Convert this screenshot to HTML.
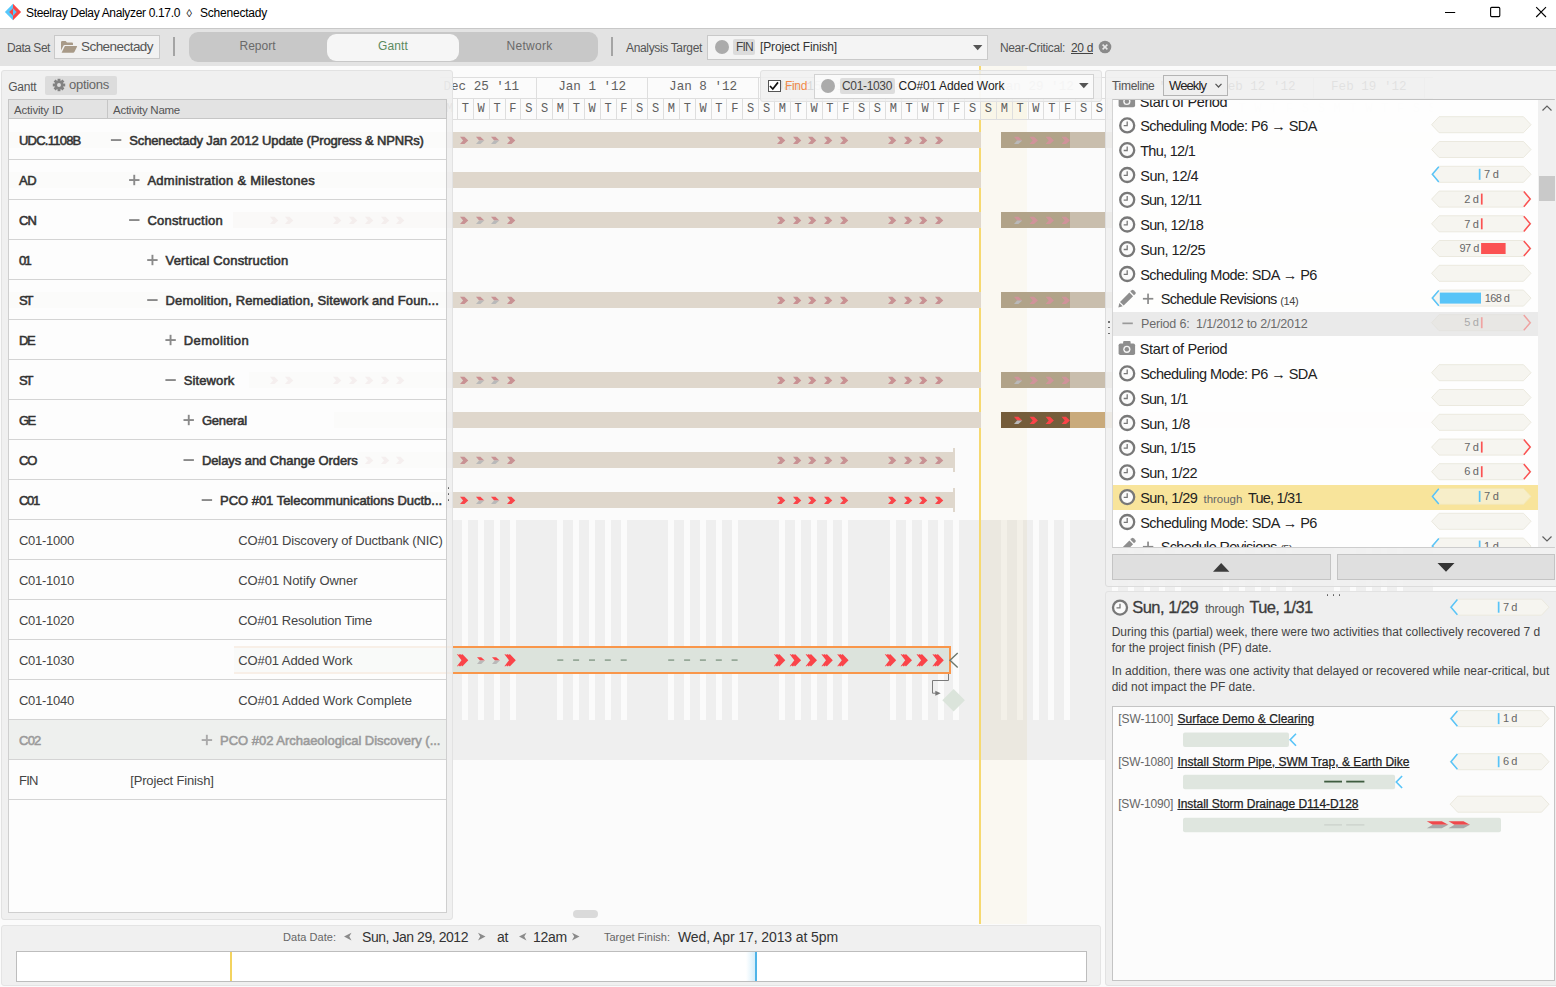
<!DOCTYPE html>
<html><head><meta charset="utf-8"><title>Steelray Delay Analyzer</title>
<style>
html,body{margin:0;padding:0;}
body{width:1556px;height:987px;overflow:hidden;background:#fbfbfb;position:relative;font-family:"Liberation Sans",sans-serif;}
#root{position:absolute;left:0;top:0;width:1556px;height:987px;overflow:hidden;}
#root div{position:absolute;box-sizing:border-box;}
#root svg{position:absolute;overflow:visible;}
</style></head><body><div id="root">
<div style="left:0;top:0;width:1433px;height:987px;clip-path:inset(66px 0 63px 9px);">
<div style="left:0px;top:66px;width:1556px;height:858px;background:#fbfbfb;"></div>
<div style="left:440px;top:520px;width:993px;height:240px;background:#efefef;"></div>
<div style="left:462px;top:520px;width:6px;height:200px;background:#fbfbfb;"></div>
<div style="left:478px;top:520px;width:6px;height:200px;background:#fbfbfb;"></div>
<div style="left:494px;top:520px;width:6px;height:200px;background:#fbfbfb;"></div>
<div style="left:510px;top:520px;width:6px;height:200px;background:#fbfbfb;"></div>
<div style="left:557px;top:520px;width:6px;height:200px;background:#fbfbfb;"></div>
<div style="left:573px;top:520px;width:6px;height:200px;background:#fbfbfb;"></div>
<div style="left:589px;top:520px;width:6px;height:200px;background:#fbfbfb;"></div>
<div style="left:605px;top:520px;width:6px;height:200px;background:#fbfbfb;"></div>
<div style="left:621px;top:520px;width:6px;height:200px;background:#fbfbfb;"></div>
<div style="left:668px;top:520px;width:6px;height:200px;background:#fbfbfb;"></div>
<div style="left:684px;top:520px;width:6px;height:200px;background:#fbfbfb;"></div>
<div style="left:700px;top:520px;width:6px;height:200px;background:#fbfbfb;"></div>
<div style="left:716px;top:520px;width:6px;height:200px;background:#fbfbfb;"></div>
<div style="left:732px;top:520px;width:6px;height:200px;background:#fbfbfb;"></div>
<div style="left:779px;top:520px;width:6px;height:200px;background:#fbfbfb;"></div>
<div style="left:795px;top:520px;width:6px;height:200px;background:#fbfbfb;"></div>
<div style="left:811px;top:520px;width:6px;height:200px;background:#fbfbfb;"></div>
<div style="left:827px;top:520px;width:6px;height:200px;background:#fbfbfb;"></div>
<div style="left:842px;top:520px;width:6px;height:200px;background:#fbfbfb;"></div>
<div style="left:890px;top:520px;width:6px;height:200px;background:#fbfbfb;"></div>
<div style="left:906px;top:520px;width:6px;height:200px;background:#fbfbfb;"></div>
<div style="left:922px;top:520px;width:6px;height:200px;background:#fbfbfb;"></div>
<div style="left:938px;top:520px;width:6px;height:200px;background:#fbfbfb;"></div>
<div style="left:953px;top:520px;width:6px;height:200px;background:#fbfbfb;"></div>
<div style="left:1001px;top:520px;width:6px;height:200px;background:#fbfbfb;"></div>
<div style="left:1017px;top:520px;width:6px;height:200px;background:#fbfbfb;"></div>
<div style="left:1033px;top:520px;width:6px;height:200px;background:#fbfbfb;"></div>
<div style="left:1048px;top:520px;width:6px;height:200px;background:#fbfbfb;"></div>
<div style="left:1064px;top:520px;width:6px;height:200px;background:#fbfbfb;"></div>
<div style="left:1112px;top:520px;width:6px;height:200px;background:#fbfbfb;"></div>
<div style="left:1128px;top:520px;width:6px;height:200px;background:#fbfbfb;"></div>
<div style="left:1144px;top:520px;width:6px;height:200px;background:#fbfbfb;"></div>
<div style="left:1159px;top:520px;width:6px;height:200px;background:#fbfbfb;"></div>
<div style="left:1175px;top:520px;width:6px;height:200px;background:#fbfbfb;"></div>
<div style="left:1223px;top:520px;width:6px;height:200px;background:#fbfbfb;"></div>
<div style="left:1239px;top:520px;width:6px;height:200px;background:#fbfbfb;"></div>
<div style="left:1255px;top:520px;width:6px;height:200px;background:#fbfbfb;"></div>
<div style="left:1270px;top:520px;width:6px;height:200px;background:#fbfbfb;"></div>
<div style="left:1286px;top:520px;width:6px;height:200px;background:#fbfbfb;"></div>
<div style="left:1334px;top:520px;width:6px;height:200px;background:#fbfbfb;"></div>
<div style="left:1350px;top:520px;width:6px;height:200px;background:#fbfbfb;"></div>
<div style="left:1366px;top:520px;width:6px;height:200px;background:#fbfbfb;"></div>
<div style="left:1381px;top:520px;width:6px;height:200px;background:#fbfbfb;"></div>
<div style="left:1397px;top:520px;width:6px;height:200px;background:#fbfbfb;"></div>
<div style="left:981px;top:66px;width:46px;height:454px;background:rgba(245,238,205,0.22);"></div>
<div style="left:981px;top:520px;width:46px;height:240px;background:rgba(225,215,190,0.30);"></div>
<div style="left:981px;top:760px;width:46px;height:164px;background:rgba(245,238,205,0.22);"></div>
<div style="left:9px;top:132px;width:972px;height:16px;background:#dfd7cc;"></div>
<div style="left:1001px;top:132px;width:69.3px;height:16px;background:#b1a389;"></div>
<div style="left:1070.3px;top:132px;width:362.70000000000005px;height:16px;background:#c9bead;"></div>
<div style="left:233px;top:212px;width:748px;height:16px;background:#dfd7cc;"></div>
<div style="left:1001px;top:212px;width:69.3px;height:16px;background:#b1a389;"></div>
<div style="left:1070.3px;top:212px;width:362.70000000000005px;height:16px;background:#c9bead;"></div>
<div style="left:9px;top:292px;width:972px;height:16px;background:#dfd7cc;"></div>
<div style="left:1001px;top:292px;width:69.3px;height:16px;background:#b1a389;"></div>
<div style="left:1070.3px;top:292px;width:362.70000000000005px;height:16px;background:#c9bead;"></div>
<div style="left:249px;top:372px;width:732px;height:16px;background:#dfd7cc;"></div>
<div style="left:1001px;top:372px;width:69.3px;height:16px;background:#b1a389;"></div>
<div style="left:1070.3px;top:372px;width:362.70000000000005px;height:16px;background:#c9bead;"></div>
<div style="left:9px;top:172px;width:972px;height:16px;background:#dfd7cc;"></div>
<div style="left:334px;top:412px;width:647px;height:16px;background:#dfd7cc;"></div>
<div style="left:1001px;top:412px;width:69.3px;height:16px;background:#755d3b;"></div>
<div style="left:1070.3px;top:412px;width:362.70000000000005px;height:16px;background:#c9aa7b;"></div>
<div style="left:357px;top:452px;width:597px;height:16px;background:#dfd7cc;"></div>
<div style="left:953px;top:448px;width:2px;height:24px;background:#dfd7cc;"></div>
<div style="left:357px;top:492px;width:597px;height:16px;background:#dfd7cc;"></div>
<div style="left:953px;top:488px;width:2px;height:24px;background:#dfd7cc;"></div>
<div style="left:234px;top:645.5px;width:717px;height:28.5px;background:#dce3dc;border:2.4px solid #f9964a;"></div>
<svg width="1556" height="987" style="left:0;top:0"><polygon points="460.0,136.8 464.4,136.8 468.3,140.4 464.4,144.0 460.0,144.0 463.1,140.4" fill="#c89193"/><polygon points="476.0,136.8 480.4,136.8 484.3,140.4 479.1,140.4" fill="#c89193"/><polygon points="479.1,140.4 484.3,140.4 480.4,144.0 476.0,144.0" fill="#b9b9b9"/><polygon points="491.0,136.8 495.4,136.8 499.3,140.4 494.1,140.4" fill="#c89193"/><polygon points="494.1,140.4 499.3,140.4 495.4,144.0 491.0,144.0" fill="#b9b9b9"/><polygon points="507.0,136.8 511.4,136.8 515.3,140.4 511.4,144.0 507.0,144.0 510.1,140.4" fill="#c89193"/><polygon points="777.0,136.8 781.4,136.8 785.3,140.4 781.4,144.0 777.0,144.0 780.1,140.4" fill="#c89193"/><polygon points="793.0,136.8 797.4,136.8 801.3,140.4 797.4,144.0 793.0,144.0 796.1,140.4" fill="#c89193"/><polygon points="808.0,136.8 812.4,136.8 816.3,140.4 812.4,144.0 808.0,144.0 811.1,140.4" fill="#c89193"/><polygon points="824.0,136.8 828.4,136.8 832.3,140.4 828.4,144.0 824.0,144.0 827.1,140.4" fill="#c89193"/><polygon points="840.0,136.8 844.4,136.8 848.3,140.4 844.4,144.0 840.0,144.0 843.1,140.4" fill="#c89193"/><polygon points="888.0,136.8 892.4,136.8 896.3,140.4 892.4,144.0 888.0,144.0 891.1,140.4" fill="#c89193"/><polygon points="904.0,136.8 908.4,136.8 912.3,140.4 908.4,144.0 904.0,144.0 907.1,140.4" fill="#c89193"/><polygon points="919.0,136.8 923.4,136.8 927.3,140.4 923.4,144.0 919.0,144.0 922.1,140.4" fill="#c89193"/><polygon points="935.0,136.8 939.4,136.8 943.3,140.4 939.4,144.0 935.0,144.0 938.1,140.4" fill="#c89193"/><polygon points="270.0,136.8 274.4,136.8 278.3,140.4 274.4,144.0 270.0,144.0 273.1,140.4" fill="#c89193"/><polygon points="285.0,136.8 289.4,136.8 293.3,140.4 289.4,144.0 285.0,144.0 288.1,140.4" fill="#c89193"/><polygon points="333.0,136.8 337.4,136.8 341.3,140.4 337.4,144.0 333.0,144.0 336.1,140.4" fill="#c89193"/><polygon points="349.0,136.8 353.4,136.8 357.3,140.4 353.4,144.0 349.0,144.0 352.1,140.4" fill="#c89193"/><polygon points="365.0,136.8 369.4,136.8 373.3,140.4 369.4,144.0 365.0,144.0 368.1,140.4" fill="#c89193"/><polygon points="381.0,136.8 385.4,136.8 389.3,140.4 385.4,144.0 381.0,144.0 384.1,140.4" fill="#c89193"/><polygon points="396.0,136.8 400.4,136.8 404.3,140.4 400.4,144.0 396.0,144.0 399.1,140.4" fill="#c89193"/><polygon points="1014.0,136.8 1018.4,136.8 1022.3,140.4 1017.1,140.4" fill="#d0939a"/><polygon points="1017.1,140.4 1022.3,140.4 1018.4,144.0 1014.0,144.0" fill="#b9b9b9"/><polygon points="1029.6,136.8 1034.0,136.8 1037.9,140.4 1034.0,144.0 1029.6,144.0 1032.7,140.4" fill="#d0939a"/><polygon points="1045.6,136.8 1050.0,136.8 1053.9,140.4 1050.0,144.0 1045.6,144.0 1048.7,140.4" fill="#d0939a"/><polygon points="1061.6,136.8 1066.0,136.8 1069.9,140.4 1066.0,144.0 1061.6,144.0 1064.7,140.4" fill="#d0939a"/><polygon points="460.0,216.8 464.4,216.8 468.3,220.4 464.4,224.0 460.0,224.0 463.1,220.4" fill="#c89193"/><polygon points="476.0,216.8 480.4,216.8 484.3,220.4 479.1,220.4" fill="#c89193"/><polygon points="479.1,220.4 484.3,220.4 480.4,224.0 476.0,224.0" fill="#b9b9b9"/><polygon points="491.0,216.8 495.4,216.8 499.3,220.4 494.1,220.4" fill="#c89193"/><polygon points="494.1,220.4 499.3,220.4 495.4,224.0 491.0,224.0" fill="#b9b9b9"/><polygon points="507.0,216.8 511.4,216.8 515.3,220.4 511.4,224.0 507.0,224.0 510.1,220.4" fill="#c89193"/><polygon points="777.0,216.8 781.4,216.8 785.3,220.4 781.4,224.0 777.0,224.0 780.1,220.4" fill="#c89193"/><polygon points="793.0,216.8 797.4,216.8 801.3,220.4 797.4,224.0 793.0,224.0 796.1,220.4" fill="#c89193"/><polygon points="808.0,216.8 812.4,216.8 816.3,220.4 812.4,224.0 808.0,224.0 811.1,220.4" fill="#c89193"/><polygon points="824.0,216.8 828.4,216.8 832.3,220.4 828.4,224.0 824.0,224.0 827.1,220.4" fill="#c89193"/><polygon points="840.0,216.8 844.4,216.8 848.3,220.4 844.4,224.0 840.0,224.0 843.1,220.4" fill="#c89193"/><polygon points="888.0,216.8 892.4,216.8 896.3,220.4 892.4,224.0 888.0,224.0 891.1,220.4" fill="#c89193"/><polygon points="904.0,216.8 908.4,216.8 912.3,220.4 908.4,224.0 904.0,224.0 907.1,220.4" fill="#c89193"/><polygon points="919.0,216.8 923.4,216.8 927.3,220.4 923.4,224.0 919.0,224.0 922.1,220.4" fill="#c89193"/><polygon points="935.0,216.8 939.4,216.8 943.3,220.4 939.4,224.0 935.0,224.0 938.1,220.4" fill="#c89193"/><polygon points="270.0,216.8 274.4,216.8 278.3,220.4 274.4,224.0 270.0,224.0 273.1,220.4" fill="#c89193"/><polygon points="285.0,216.8 289.4,216.8 293.3,220.4 289.4,224.0 285.0,224.0 288.1,220.4" fill="#c89193"/><polygon points="333.0,216.8 337.4,216.8 341.3,220.4 337.4,224.0 333.0,224.0 336.1,220.4" fill="#c89193"/><polygon points="349.0,216.8 353.4,216.8 357.3,220.4 353.4,224.0 349.0,224.0 352.1,220.4" fill="#c89193"/><polygon points="365.0,216.8 369.4,216.8 373.3,220.4 369.4,224.0 365.0,224.0 368.1,220.4" fill="#c89193"/><polygon points="381.0,216.8 385.4,216.8 389.3,220.4 385.4,224.0 381.0,224.0 384.1,220.4" fill="#c89193"/><polygon points="396.0,216.8 400.4,216.8 404.3,220.4 400.4,224.0 396.0,224.0 399.1,220.4" fill="#c89193"/><polygon points="1014.0,216.8 1018.4,216.8 1022.3,220.4 1017.1,220.4" fill="#d0939a"/><polygon points="1017.1,220.4 1022.3,220.4 1018.4,224.0 1014.0,224.0" fill="#b9b9b9"/><polygon points="1029.6,216.8 1034.0,216.8 1037.9,220.4 1034.0,224.0 1029.6,224.0 1032.7,220.4" fill="#d0939a"/><polygon points="1045.6,216.8 1050.0,216.8 1053.9,220.4 1050.0,224.0 1045.6,224.0 1048.7,220.4" fill="#d0939a"/><polygon points="1061.6,216.8 1066.0,216.8 1069.9,220.4 1066.0,224.0 1061.6,224.0 1064.7,220.4" fill="#d0939a"/><polygon points="460.0,296.8 464.4,296.8 468.3,300.4 464.4,304.0 460.0,304.0 463.1,300.4" fill="#c89193"/><polygon points="476.0,296.8 480.4,296.8 484.3,300.4 479.1,300.4" fill="#c89193"/><polygon points="479.1,300.4 484.3,300.4 480.4,304.0 476.0,304.0" fill="#b9b9b9"/><polygon points="491.0,296.8 495.4,296.8 499.3,300.4 494.1,300.4" fill="#c89193"/><polygon points="494.1,300.4 499.3,300.4 495.4,304.0 491.0,304.0" fill="#b9b9b9"/><polygon points="507.0,296.8 511.4,296.8 515.3,300.4 511.4,304.0 507.0,304.0 510.1,300.4" fill="#c89193"/><polygon points="777.0,296.8 781.4,296.8 785.3,300.4 781.4,304.0 777.0,304.0 780.1,300.4" fill="#c89193"/><polygon points="793.0,296.8 797.4,296.8 801.3,300.4 797.4,304.0 793.0,304.0 796.1,300.4" fill="#c89193"/><polygon points="808.0,296.8 812.4,296.8 816.3,300.4 812.4,304.0 808.0,304.0 811.1,300.4" fill="#c89193"/><polygon points="824.0,296.8 828.4,296.8 832.3,300.4 828.4,304.0 824.0,304.0 827.1,300.4" fill="#c89193"/><polygon points="840.0,296.8 844.4,296.8 848.3,300.4 844.4,304.0 840.0,304.0 843.1,300.4" fill="#c89193"/><polygon points="888.0,296.8 892.4,296.8 896.3,300.4 892.4,304.0 888.0,304.0 891.1,300.4" fill="#c89193"/><polygon points="904.0,296.8 908.4,296.8 912.3,300.4 908.4,304.0 904.0,304.0 907.1,300.4" fill="#c89193"/><polygon points="919.0,296.8 923.4,296.8 927.3,300.4 923.4,304.0 919.0,304.0 922.1,300.4" fill="#c89193"/><polygon points="935.0,296.8 939.4,296.8 943.3,300.4 939.4,304.0 935.0,304.0 938.1,300.4" fill="#c89193"/><polygon points="270.0,296.8 274.4,296.8 278.3,300.4 274.4,304.0 270.0,304.0 273.1,300.4" fill="#c89193"/><polygon points="285.0,296.8 289.4,296.8 293.3,300.4 289.4,304.0 285.0,304.0 288.1,300.4" fill="#c89193"/><polygon points="333.0,296.8 337.4,296.8 341.3,300.4 337.4,304.0 333.0,304.0 336.1,300.4" fill="#c89193"/><polygon points="349.0,296.8 353.4,296.8 357.3,300.4 353.4,304.0 349.0,304.0 352.1,300.4" fill="#c89193"/><polygon points="365.0,296.8 369.4,296.8 373.3,300.4 369.4,304.0 365.0,304.0 368.1,300.4" fill="#c89193"/><polygon points="381.0,296.8 385.4,296.8 389.3,300.4 385.4,304.0 381.0,304.0 384.1,300.4" fill="#c89193"/><polygon points="396.0,296.8 400.4,296.8 404.3,300.4 400.4,304.0 396.0,304.0 399.1,300.4" fill="#c89193"/><polygon points="1014.0,296.8 1018.4,296.8 1022.3,300.4 1017.1,300.4" fill="#d0939a"/><polygon points="1017.1,300.4 1022.3,300.4 1018.4,304.0 1014.0,304.0" fill="#b9b9b9"/><polygon points="1029.6,296.8 1034.0,296.8 1037.9,300.4 1034.0,304.0 1029.6,304.0 1032.7,300.4" fill="#d0939a"/><polygon points="1045.6,296.8 1050.0,296.8 1053.9,300.4 1050.0,304.0 1045.6,304.0 1048.7,300.4" fill="#d0939a"/><polygon points="1061.6,296.8 1066.0,296.8 1069.9,300.4 1066.0,304.0 1061.6,304.0 1064.7,300.4" fill="#d0939a"/><polygon points="460.0,376.8 464.4,376.8 468.3,380.4 464.4,384.0 460.0,384.0 463.1,380.4" fill="#c89193"/><polygon points="476.0,376.8 480.4,376.8 484.3,380.4 479.1,380.4" fill="#c89193"/><polygon points="479.1,380.4 484.3,380.4 480.4,384.0 476.0,384.0" fill="#b9b9b9"/><polygon points="491.0,376.8 495.4,376.8 499.3,380.4 494.1,380.4" fill="#c89193"/><polygon points="494.1,380.4 499.3,380.4 495.4,384.0 491.0,384.0" fill="#b9b9b9"/><polygon points="507.0,376.8 511.4,376.8 515.3,380.4 511.4,384.0 507.0,384.0 510.1,380.4" fill="#c89193"/><polygon points="777.0,376.8 781.4,376.8 785.3,380.4 781.4,384.0 777.0,384.0 780.1,380.4" fill="#c89193"/><polygon points="793.0,376.8 797.4,376.8 801.3,380.4 797.4,384.0 793.0,384.0 796.1,380.4" fill="#c89193"/><polygon points="808.0,376.8 812.4,376.8 816.3,380.4 812.4,384.0 808.0,384.0 811.1,380.4" fill="#c89193"/><polygon points="824.0,376.8 828.4,376.8 832.3,380.4 828.4,384.0 824.0,384.0 827.1,380.4" fill="#c89193"/><polygon points="840.0,376.8 844.4,376.8 848.3,380.4 844.4,384.0 840.0,384.0 843.1,380.4" fill="#c89193"/><polygon points="888.0,376.8 892.4,376.8 896.3,380.4 892.4,384.0 888.0,384.0 891.1,380.4" fill="#c89193"/><polygon points="904.0,376.8 908.4,376.8 912.3,380.4 908.4,384.0 904.0,384.0 907.1,380.4" fill="#c89193"/><polygon points="919.0,376.8 923.4,376.8 927.3,380.4 923.4,384.0 919.0,384.0 922.1,380.4" fill="#c89193"/><polygon points="935.0,376.8 939.4,376.8 943.3,380.4 939.4,384.0 935.0,384.0 938.1,380.4" fill="#c89193"/><polygon points="270.0,376.8 274.4,376.8 278.3,380.4 274.4,384.0 270.0,384.0 273.1,380.4" fill="#c89193"/><polygon points="285.0,376.8 289.4,376.8 293.3,380.4 289.4,384.0 285.0,384.0 288.1,380.4" fill="#c89193"/><polygon points="333.0,376.8 337.4,376.8 341.3,380.4 337.4,384.0 333.0,384.0 336.1,380.4" fill="#c89193"/><polygon points="349.0,376.8 353.4,376.8 357.3,380.4 353.4,384.0 349.0,384.0 352.1,380.4" fill="#c89193"/><polygon points="365.0,376.8 369.4,376.8 373.3,380.4 369.4,384.0 365.0,384.0 368.1,380.4" fill="#c89193"/><polygon points="381.0,376.8 385.4,376.8 389.3,380.4 385.4,384.0 381.0,384.0 384.1,380.4" fill="#c89193"/><polygon points="396.0,376.8 400.4,376.8 404.3,380.4 400.4,384.0 396.0,384.0 399.1,380.4" fill="#c89193"/><polygon points="1014.0,376.8 1018.4,376.8 1022.3,380.4 1017.1,380.4" fill="#d0939a"/><polygon points="1017.1,380.4 1022.3,380.4 1018.4,384.0 1014.0,384.0" fill="#b9b9b9"/><polygon points="1029.6,376.8 1034.0,376.8 1037.9,380.4 1034.0,384.0 1029.6,384.0 1032.7,380.4" fill="#d0939a"/><polygon points="1045.6,376.8 1050.0,376.8 1053.9,380.4 1050.0,384.0 1045.6,384.0 1048.7,380.4" fill="#d0939a"/><polygon points="1061.6,376.8 1066.0,376.8 1069.9,380.4 1066.0,384.0 1061.6,384.0 1064.7,380.4" fill="#d0939a"/><polygon points="1014.0,416.8 1018.4,416.8 1022.3,420.4 1017.1,420.4" fill="#fa4449"/><polygon points="1017.1,420.4 1022.3,420.4 1018.4,424.0 1014.0,424.0" fill="#b9b9b9"/><polygon points="1029.6,416.8 1034.0,416.8 1037.9,420.4 1034.0,424.0 1029.6,424.0 1032.7,420.4" fill="#fa4449"/><polygon points="1045.6,416.8 1050.0,416.8 1053.9,420.4 1050.0,424.0 1045.6,424.0 1048.7,420.4" fill="#fa4449"/><polygon points="1061.6,416.8 1066.0,416.8 1069.9,420.4 1066.0,424.0 1061.6,424.0 1064.7,420.4" fill="#fa4449"/><polygon points="460.0,456.8 464.4,456.8 468.3,460.4 464.4,464.0 460.0,464.0 463.1,460.4" fill="#c89193"/><polygon points="476.0,456.8 480.4,456.8 484.3,460.4 479.1,460.4" fill="#c89193"/><polygon points="479.1,460.4 484.3,460.4 480.4,464.0 476.0,464.0" fill="#b9b9b9"/><polygon points="491.0,456.8 495.4,456.8 499.3,460.4 494.1,460.4" fill="#c89193"/><polygon points="494.1,460.4 499.3,460.4 495.4,464.0 491.0,464.0" fill="#b9b9b9"/><polygon points="507.0,456.8 511.4,456.8 515.3,460.4 511.4,464.0 507.0,464.0 510.1,460.4" fill="#c89193"/><polygon points="777.0,456.8 781.4,456.8 785.3,460.4 781.4,464.0 777.0,464.0 780.1,460.4" fill="#c89193"/><polygon points="793.0,456.8 797.4,456.8 801.3,460.4 797.4,464.0 793.0,464.0 796.1,460.4" fill="#c89193"/><polygon points="808.0,456.8 812.4,456.8 816.3,460.4 812.4,464.0 808.0,464.0 811.1,460.4" fill="#c89193"/><polygon points="824.0,456.8 828.4,456.8 832.3,460.4 828.4,464.0 824.0,464.0 827.1,460.4" fill="#c89193"/><polygon points="840.0,456.8 844.4,456.8 848.3,460.4 844.4,464.0 840.0,464.0 843.1,460.4" fill="#c89193"/><polygon points="888.0,456.8 892.4,456.8 896.3,460.4 892.4,464.0 888.0,464.0 891.1,460.4" fill="#c89193"/><polygon points="904.0,456.8 908.4,456.8 912.3,460.4 908.4,464.0 904.0,464.0 907.1,460.4" fill="#c89193"/><polygon points="919.0,456.8 923.4,456.8 927.3,460.4 923.4,464.0 919.0,464.0 922.1,460.4" fill="#c89193"/><polygon points="935.0,456.8 939.4,456.8 943.3,460.4 939.4,464.0 935.0,464.0 938.1,460.4" fill="#c89193"/><polygon points="365.0,456.8 369.4,456.8 373.3,460.4 369.4,464.0 365.0,464.0 368.1,460.4" fill="#c89193"/><polygon points="381.0,456.8 385.4,456.8 389.3,460.4 385.4,464.0 381.0,464.0 384.1,460.4" fill="#c89193"/><polygon points="396.0,456.8 400.4,456.8 404.3,460.4 400.4,464.0 396.0,464.0 399.1,460.4" fill="#c89193"/><polygon points="460.0,496.8 464.4,496.8 468.3,500.4 464.4,504.0 460.0,504.0 463.1,500.4" fill="#fa4449"/><polygon points="476.0,496.8 480.4,496.8 484.3,500.4 479.1,500.4" fill="#fa4449"/><polygon points="479.1,500.4 484.3,500.4 480.4,504.0 476.0,504.0" fill="#b9b9b9"/><polygon points="491.0,496.8 495.4,496.8 499.3,500.4 494.1,500.4" fill="#fa4449"/><polygon points="494.1,500.4 499.3,500.4 495.4,504.0 491.0,504.0" fill="#b9b9b9"/><polygon points="507.0,496.8 511.4,496.8 515.3,500.4 511.4,504.0 507.0,504.0 510.1,500.4" fill="#fa4449"/><polygon points="777.0,496.8 781.4,496.8 785.3,500.4 781.4,504.0 777.0,504.0 780.1,500.4" fill="#fa4449"/><polygon points="793.0,496.8 797.4,496.8 801.3,500.4 797.4,504.0 793.0,504.0 796.1,500.4" fill="#fa4449"/><polygon points="808.0,496.8 812.4,496.8 816.3,500.4 812.4,504.0 808.0,504.0 811.1,500.4" fill="#fa4449"/><polygon points="824.0,496.8 828.4,496.8 832.3,500.4 828.4,504.0 824.0,504.0 827.1,500.4" fill="#fa4449"/><polygon points="840.0,496.8 844.4,496.8 848.3,500.4 844.4,504.0 840.0,504.0 843.1,500.4" fill="#fa4449"/><polygon points="888.0,496.8 892.4,496.8 896.3,500.4 892.4,504.0 888.0,504.0 891.1,500.4" fill="#fa4449"/><polygon points="904.0,496.8 908.4,496.8 912.3,500.4 908.4,504.0 904.0,504.0 907.1,500.4" fill="#fa4449"/><polygon points="919.0,496.8 923.4,496.8 927.3,500.4 923.4,504.0 919.0,504.0 922.1,500.4" fill="#fa4449"/><polygon points="935.0,496.8 939.4,496.8 943.3,500.4 939.4,504.0 935.0,504.0 938.1,500.4" fill="#fa4449"/><polygon points="365.0,496.8 369.4,496.8 373.3,500.4 369.4,504.0 365.0,504.0 368.1,500.4" fill="#fa4449"/><polygon points="381.0,496.8 385.4,496.8 389.3,500.4 385.4,504.0 381.0,504.0 384.1,500.4" fill="#fa4449"/><polygon points="396.0,496.8 400.4,496.8 404.3,500.4 400.4,504.0 396.0,504.0 399.1,500.4" fill="#fa4449"/><polygon points="456.9,654.2 458.1,654.2 458.7,655.1 459.4,654.2 460.6,654.2 461.2,655.1 461.9,654.2 462.5,654.2 468.3,660.2 462.5,666.2 461.9,666.2 461.2,665.3 460.6,666.2 459.4,666.2 458.7,665.3 458.1,666.2 456.9,666.2 461.5,660.2" fill="#fa4449"/><polygon points="477.0,657.2 481.2,657.2 484.9,660.6 480.0,660.6" fill="#fa4449"/><polygon points="480.0,660.6 484.9,660.6 481.2,664.0 477.0,664.0" fill="#b9b9b9"/><polygon points="492.0,657.2 496.2,657.2 499.9,660.6 495.0,660.6" fill="#fa4449"/><polygon points="495.0,660.6 499.9,660.6 496.2,664.0 492.0,664.0" fill="#b9b9b9"/><polygon points="504.4,654.2 505.6,654.2 506.2,655.1 506.9,654.2 508.1,654.2 508.7,655.1 509.4,654.2 510.0,654.2 515.8,660.2 510.0,666.2 509.4,666.2 508.7,665.3 508.1,666.2 506.9,666.2 506.2,665.3 505.6,666.2 504.4,666.2 509.0,660.2" fill="#fa4449"/><polygon points="773.9,654.2 775.1,654.2 775.7,655.1 776.4,654.2 777.6,654.2 778.2,655.1 778.9,654.2 779.5,654.2 785.3,660.2 779.5,666.2 778.9,666.2 778.2,665.3 777.6,666.2 776.4,666.2 775.7,665.3 775.1,666.2 773.9,666.2 778.5,660.2" fill="#fa4449"/><polygon points="789.7,654.2 790.9,654.2 791.5,655.1 792.2,654.2 793.4,654.2 794.0,655.1 794.7,654.2 795.3,654.2 801.1,660.2 795.3,666.2 794.7,666.2 794.0,665.3 793.4,666.2 792.2,666.2 791.5,665.3 790.9,666.2 789.7,666.2 794.3,660.2" fill="#fa4449"/><polygon points="805.6,654.2 806.8,654.2 807.4,655.1 808.1,654.2 809.3,654.2 809.9,655.1 810.6,654.2 811.2,654.2 817.0,660.2 811.2,666.2 810.6,666.2 809.9,665.3 809.3,666.2 808.1,666.2 807.4,665.3 806.8,666.2 805.6,666.2 810.2,660.2" fill="#fa4449"/><polygon points="821.4,654.2 822.6,654.2 823.2,655.1 823.9,654.2 825.1,654.2 825.7,655.1 826.4,654.2 827.0,654.2 832.8,660.2 827.0,666.2 826.4,666.2 825.7,665.3 825.1,666.2 823.9,666.2 823.2,665.3 822.6,666.2 821.4,666.2 826.0,660.2" fill="#fa4449"/><polygon points="837.2,654.2 838.4,654.2 839.0,655.1 839.7,654.2 840.9,654.2 841.5,655.1 842.2,654.2 842.8,654.2 848.6,660.2 842.8,666.2 842.2,666.2 841.5,665.3 840.9,666.2 839.7,666.2 839.0,665.3 838.4,666.2 837.2,666.2 841.8,660.2" fill="#fa4449"/><polygon points="884.8,654.2 886.0,654.2 886.6,655.1 887.3,654.2 888.5,654.2 889.1,655.1 889.8,654.2 890.4,654.2 896.2,660.2 890.4,666.2 889.8,666.2 889.1,665.3 888.5,666.2 887.3,666.2 886.6,665.3 886.0,666.2 884.8,666.2 889.4,660.2" fill="#fa4449"/><polygon points="900.6,654.2 901.8,654.2 902.4,655.1 903.1,654.2 904.3,654.2 904.9,655.1 905.6,654.2 906.2,654.2 912.0,660.2 906.2,666.2 905.6,666.2 904.9,665.3 904.3,666.2 903.1,666.2 902.4,665.3 901.8,666.2 900.6,666.2 905.2,660.2" fill="#fa4449"/><polygon points="916.5,654.2 917.7,654.2 918.3,655.1 919.0,654.2 920.2,654.2 920.8,655.1 921.5,654.2 922.1,654.2 927.9,660.2 922.1,666.2 921.5,666.2 920.8,665.3 920.2,666.2 919.0,666.2 918.3,665.3 917.7,666.2 916.5,666.2 921.1,660.2" fill="#fa4449"/><polygon points="932.4,654.2 933.6,654.2 934.2,655.1 934.9,654.2 936.1,654.2 936.7,655.1 937.4,654.2 938.0,654.2 943.8,660.2 938.0,666.2 937.4,666.2 936.7,665.3 936.1,666.2 934.9,666.2 934.2,665.3 933.6,666.2 932.4,666.2 937.0,660.2" fill="#fa4449"/><rect x="557.3" y="659.3" width="6" height="1.6" fill="#8fa292"/><rect x="573.1" y="659.3" width="6" height="1.6" fill="#8fa292"/><rect x="589.0" y="659.3" width="6" height="1.6" fill="#8fa292"/><rect x="604.8" y="659.3" width="6" height="1.6" fill="#8fa292"/><rect x="620.7" y="659.3" width="6" height="1.6" fill="#8fa292"/><rect x="668.2" y="659.3" width="6" height="1.6" fill="#8fa292"/><rect x="684.1" y="659.3" width="6" height="1.6" fill="#8fa292"/><rect x="699.9" y="659.3" width="6" height="1.6" fill="#8fa292"/><rect x="715.8" y="659.3" width="6" height="1.6" fill="#8fa292"/><rect x="731.6" y="659.3" width="6" height="1.6" fill="#8fa292"/><polyline points="957.7,653 950,660.3 957.7,667.6" fill="none" stroke="#6c786e" stroke-width="1.4"/><polyline points="948.5,674 948.5,680.5 932.5,680.5 932.5,693.2 936,693.2" fill="none" stroke="#7a7a7a" stroke-width="1"/><polygon points="935.3,690.7 940.7,693.2 935.3,695.7" fill="#777"/><polygon points="953.6,688.9 964.9,700.2 953.6,711.5 942.3,700.2" fill="#dbe4db"/></svg>
<div style="left:978.9px;top:66px;width:2.4px;height:858px;background:#f6d970;"></div>
<div style="left:970px;top:132px;width:11px;height:16px;background:#dfd7cc;"></div>
<div style="left:970px;top:172px;width:11px;height:16px;background:#dfd7cc;"></div>
<div style="left:970px;top:212px;width:11px;height:16px;background:#dfd7cc;"></div>
<div style="left:970px;top:292px;width:11px;height:16px;background:#dfd7cc;"></div>
<div style="left:970px;top:372px;width:11px;height:16px;background:#dfd7cc;"></div>
<div style="left:970px;top:412px;width:11px;height:16px;background:#dfd7cc;"></div>
<div style="left:440px;top:70px;width:993px;height:49.5px;background:#fbfbfb;"></div>
<div style="left:440px;top:76.5px;width:993px;height:1px;background:#dedede;"></div>
<div style="left:440px;top:97.7px;width:993px;height:1px;background:#dedede;"></div>
<div style="left:440px;top:118.7px;width:993px;height:1px;background:#dedede;"></div>
<div style="left:1423.8px;top:77px;width:1px;height:21px;background:#dedede;"></div>
<div style="top:79.00px;line-height:16px;font-size:12.6px;color:#606060;font-family:'Liberation Mono',monospace;white-space:pre;left:181.22500000000008px;width:600px;text-align:center;"><span id="t0">Dec 25 &#x27;11</span></div>
<div style="left:536.2px;top:77px;width:1px;height:21px;background:#dedede;"></div>
<div style="top:79.00px;line-height:16px;font-size:12.6px;color:#606060;font-family:'Liberation Mono',monospace;white-space:pre;left:292.17500000000007px;width:600px;text-align:center;"><span id="t1">Jan 1 &#x27;12</span></div>
<div style="left:647.2px;top:77px;width:1px;height:21px;background:#dedede;"></div>
<div style="top:79.00px;line-height:16px;font-size:12.6px;color:#606060;font-family:'Liberation Mono',monospace;white-space:pre;left:403.1250000000001px;width:600px;text-align:center;"><span id="t2">Jan 8 &#x27;12</span></div>
<div style="left:758.1px;top:77px;width:1px;height:21px;background:#dedede;"></div>
<div style="top:79.00px;line-height:16px;font-size:12.6px;color:#606060;font-family:'Liberation Mono',monospace;white-space:pre;left:514.075px;width:600px;text-align:center;"><span id="t3">Jan 15 &#x27;12</span></div>
<div style="left:869.0px;top:77px;width:1px;height:21px;background:#dedede;"></div>
<div style="top:79.00px;line-height:16px;font-size:12.6px;color:#606060;font-family:'Liberation Mono',monospace;white-space:pre;left:625.025px;width:600px;text-align:center;"><span id="t4">Jan 22 &#x27;12</span></div>
<div style="left:980.0px;top:77px;width:1px;height:21px;background:#dedede;"></div>
<div style="top:79.00px;line-height:16px;font-size:12.6px;color:#606060;font-family:'Liberation Mono',monospace;white-space:pre;left:735.9749999999999px;width:600px;text-align:center;"><span id="t5">Jan 29 &#x27;12</span></div>
<div style="left:1091.0px;top:77px;width:1px;height:21px;background:#dedede;"></div>
<div style="top:79.00px;line-height:16px;font-size:12.6px;color:#606060;font-family:'Liberation Mono',monospace;white-space:pre;left:846.925px;width:600px;text-align:center;"><span id="t6">Feb 5 &#x27;12</span></div>
<div style="left:1201.9px;top:77px;width:1px;height:21px;background:#dedede;"></div>
<div style="top:79.00px;line-height:16px;font-size:12.6px;color:#606060;font-family:'Liberation Mono',monospace;white-space:pre;left:957.875px;width:600px;text-align:center;"><span id="t7">Feb 12 &#x27;12</span></div>
<div style="left:1312.8px;top:77px;width:1px;height:21px;background:#dedede;"></div>
<div style="top:79.00px;line-height:16px;font-size:12.6px;color:#606060;font-family:'Liberation Mono',monospace;white-space:pre;left:1068.8249999999998px;width:600px;text-align:center;"><span id="t8">Feb 19 &#x27;12</span></div>
<div style="left:981px;top:98.5px;width:46px;height:20px;background:rgba(245,236,190,0.30);"></div>
<div style="left:441.1px;top:98px;width:1px;height:21px;background:#dedede;"></div>
<div style="top:101.30px;line-height:16px;font-size:12px;color:#606060;font-family:'Liberation Mono',monospace;white-space:pre;left:149.52500000000003px;width:600px;text-align:center;"><span id="t9">M</span></div>
<div style="left:457.0px;top:98px;width:1px;height:21px;background:#dedede;"></div>
<div style="top:101.30px;line-height:16px;font-size:12px;color:#606060;font-family:'Liberation Mono',monospace;white-space:pre;left:165.37500000000006px;width:600px;text-align:center;"><span id="t10">T</span></div>
<div style="left:472.8px;top:98px;width:1px;height:21px;background:#dedede;"></div>
<div style="top:101.30px;line-height:16px;font-size:12px;color:#606060;font-family:'Liberation Mono',monospace;white-space:pre;left:181.22500000000008px;width:600px;text-align:center;"><span id="t11">W</span></div>
<div style="left:488.7px;top:98px;width:1px;height:21px;background:#dedede;"></div>
<div style="top:101.30px;line-height:16px;font-size:12px;color:#606060;font-family:'Liberation Mono',monospace;white-space:pre;left:197.07500000000005px;width:600px;text-align:center;"><span id="t12">T</span></div>
<div style="left:504.5px;top:98px;width:1px;height:21px;background:#dedede;"></div>
<div style="top:101.30px;line-height:16px;font-size:12px;color:#606060;font-family:'Liberation Mono',monospace;white-space:pre;left:212.92500000000007px;width:600px;text-align:center;"><span id="t13">F</span></div>
<div style="left:520.4px;top:98px;width:1px;height:21px;background:#dedede;"></div>
<div style="top:101.30px;line-height:16px;font-size:12px;color:#606060;font-family:'Liberation Mono',monospace;white-space:pre;left:228.77499999999998px;width:600px;text-align:center;"><span id="t14">S</span></div>
<div style="left:536.2px;top:98px;width:1px;height:21px;background:#dedede;"></div>
<div style="top:101.30px;line-height:16px;font-size:12px;color:#606060;font-family:'Liberation Mono',monospace;white-space:pre;left:244.625px;width:600px;text-align:center;"><span id="t15">S</span></div>
<div style="left:552.1px;top:98px;width:1px;height:21px;background:#dedede;"></div>
<div style="top:101.30px;line-height:16px;font-size:12px;color:#606060;font-family:'Liberation Mono',monospace;white-space:pre;left:260.475px;width:600px;text-align:center;"><span id="t16">M</span></div>
<div style="left:567.9px;top:98px;width:1px;height:21px;background:#dedede;"></div>
<div style="top:101.30px;line-height:16px;font-size:12px;color:#606060;font-family:'Liberation Mono',monospace;white-space:pre;left:276.32500000000005px;width:600px;text-align:center;"><span id="t17">T</span></div>
<div style="left:583.8px;top:98px;width:1px;height:21px;background:#dedede;"></div>
<div style="top:101.30px;line-height:16px;font-size:12px;color:#606060;font-family:'Liberation Mono',monospace;white-space:pre;left:292.17499999999995px;width:600px;text-align:center;"><span id="t18">W</span></div>
<div style="left:599.6px;top:98px;width:1px;height:21px;background:#dedede;"></div>
<div style="top:101.30px;line-height:16px;font-size:12px;color:#606060;font-family:'Liberation Mono',monospace;white-space:pre;left:308.025px;width:600px;text-align:center;"><span id="t19">T</span></div>
<div style="left:615.5px;top:98px;width:1px;height:21px;background:#dedede;"></div>
<div style="top:101.30px;line-height:16px;font-size:12px;color:#606060;font-family:'Liberation Mono',monospace;white-space:pre;left:323.875px;width:600px;text-align:center;"><span id="t20">F</span></div>
<div style="left:631.3px;top:98px;width:1px;height:21px;background:#dedede;"></div>
<div style="top:101.30px;line-height:16px;font-size:12px;color:#606060;font-family:'Liberation Mono',monospace;white-space:pre;left:339.725px;width:600px;text-align:center;"><span id="t21">S</span></div>
<div style="left:647.2px;top:98px;width:1px;height:21px;background:#dedede;"></div>
<div style="top:101.30px;line-height:16px;font-size:12px;color:#606060;font-family:'Liberation Mono',monospace;white-space:pre;left:355.57500000000005px;width:600px;text-align:center;"><span id="t22">S</span></div>
<div style="left:663.0px;top:98px;width:1px;height:21px;background:#dedede;"></div>
<div style="top:101.30px;line-height:16px;font-size:12px;color:#606060;font-family:'Liberation Mono',monospace;white-space:pre;left:371.42499999999995px;width:600px;text-align:center;"><span id="t23">M</span></div>
<div style="left:678.9px;top:98px;width:1px;height:21px;background:#dedede;"></div>
<div style="top:101.30px;line-height:16px;font-size:12px;color:#606060;font-family:'Liberation Mono',monospace;white-space:pre;left:387.275px;width:600px;text-align:center;"><span id="t24">T</span></div>
<div style="left:694.7px;top:98px;width:1px;height:21px;background:#dedede;"></div>
<div style="top:101.30px;line-height:16px;font-size:12px;color:#606060;font-family:'Liberation Mono',monospace;white-space:pre;left:403.125px;width:600px;text-align:center;"><span id="t25">W</span></div>
<div style="left:710.6px;top:98px;width:1px;height:21px;background:#dedede;"></div>
<div style="top:101.30px;line-height:16px;font-size:12px;color:#606060;font-family:'Liberation Mono',monospace;white-space:pre;left:418.975px;width:600px;text-align:center;"><span id="t26">T</span></div>
<div style="left:726.4px;top:98px;width:1px;height:21px;background:#dedede;"></div>
<div style="top:101.30px;line-height:16px;font-size:12px;color:#606060;font-family:'Liberation Mono',monospace;white-space:pre;left:434.82500000000005px;width:600px;text-align:center;"><span id="t27">F</span></div>
<div style="left:742.2px;top:98px;width:1px;height:21px;background:#dedede;"></div>
<div style="top:101.30px;line-height:16px;font-size:12px;color:#606060;font-family:'Liberation Mono',monospace;white-space:pre;left:450.67499999999995px;width:600px;text-align:center;"><span id="t28">S</span></div>
<div style="left:758.1px;top:98px;width:1px;height:21px;background:#dedede;"></div>
<div style="top:101.30px;line-height:16px;font-size:12px;color:#606060;font-family:'Liberation Mono',monospace;white-space:pre;left:466.525px;width:600px;text-align:center;"><span id="t29">S</span></div>
<div style="left:774.0px;top:98px;width:1px;height:21px;background:#dedede;"></div>
<div style="top:101.30px;line-height:16px;font-size:12px;color:#606060;font-family:'Liberation Mono',monospace;white-space:pre;left:482.375px;width:600px;text-align:center;"><span id="t30">M</span></div>
<div style="left:789.8px;top:98px;width:1px;height:21px;background:#dedede;"></div>
<div style="top:101.30px;line-height:16px;font-size:12px;color:#606060;font-family:'Liberation Mono',monospace;white-space:pre;left:498.225px;width:600px;text-align:center;"><span id="t31">T</span></div>
<div style="left:805.7px;top:98px;width:1px;height:21px;background:#dedede;"></div>
<div style="top:101.30px;line-height:16px;font-size:12px;color:#606060;font-family:'Liberation Mono',monospace;white-space:pre;left:514.075px;width:600px;text-align:center;"><span id="t32">W</span></div>
<div style="left:821.5px;top:98px;width:1px;height:21px;background:#dedede;"></div>
<div style="top:101.30px;line-height:16px;font-size:12px;color:#606060;font-family:'Liberation Mono',monospace;white-space:pre;left:529.925px;width:600px;text-align:center;"><span id="t33">T</span></div>
<div style="left:837.4px;top:98px;width:1px;height:21px;background:#dedede;"></div>
<div style="top:101.30px;line-height:16px;font-size:12px;color:#606060;font-family:'Liberation Mono',monospace;white-space:pre;left:545.775px;width:600px;text-align:center;"><span id="t34">F</span></div>
<div style="left:853.2px;top:98px;width:1px;height:21px;background:#dedede;"></div>
<div style="top:101.30px;line-height:16px;font-size:12px;color:#606060;font-family:'Liberation Mono',monospace;white-space:pre;left:561.625px;width:600px;text-align:center;"><span id="t35">S</span></div>
<div style="left:869.0px;top:98px;width:1px;height:21px;background:#dedede;"></div>
<div style="top:101.30px;line-height:16px;font-size:12px;color:#606060;font-family:'Liberation Mono',monospace;white-space:pre;left:577.4749999999999px;width:600px;text-align:center;"><span id="t36">S</span></div>
<div style="left:884.9px;top:98px;width:1px;height:21px;background:#dedede;"></div>
<div style="top:101.30px;line-height:16px;font-size:12px;color:#606060;font-family:'Liberation Mono',monospace;white-space:pre;left:593.325px;width:600px;text-align:center;"><span id="t37">M</span></div>
<div style="left:900.8px;top:98px;width:1px;height:21px;background:#dedede;"></div>
<div style="top:101.30px;line-height:16px;font-size:12px;color:#606060;font-family:'Liberation Mono',monospace;white-space:pre;left:609.175px;width:600px;text-align:center;"><span id="t38">T</span></div>
<div style="left:916.6px;top:98px;width:1px;height:21px;background:#dedede;"></div>
<div style="top:101.30px;line-height:16px;font-size:12px;color:#606060;font-family:'Liberation Mono',monospace;white-space:pre;left:625.025px;width:600px;text-align:center;"><span id="t39">W</span></div>
<div style="left:932.5px;top:98px;width:1px;height:21px;background:#dedede;"></div>
<div style="top:101.30px;line-height:16px;font-size:12px;color:#606060;font-family:'Liberation Mono',monospace;white-space:pre;left:640.875px;width:600px;text-align:center;"><span id="t40">T</span></div>
<div style="left:948.3px;top:98px;width:1px;height:21px;background:#dedede;"></div>
<div style="top:101.30px;line-height:16px;font-size:12px;color:#606060;font-family:'Liberation Mono',monospace;white-space:pre;left:656.7249999999999px;width:600px;text-align:center;"><span id="t41">F</span></div>
<div style="left:964.2px;top:98px;width:1px;height:21px;background:#dedede;"></div>
<div style="top:101.30px;line-height:16px;font-size:12px;color:#606060;font-family:'Liberation Mono',monospace;white-space:pre;left:672.575px;width:600px;text-align:center;"><span id="t42">S</span></div>
<div style="left:980.0px;top:98px;width:1px;height:21px;background:#dedede;"></div>
<div style="top:101.30px;line-height:16px;font-size:12px;color:#606060;font-family:'Liberation Mono',monospace;white-space:pre;left:688.425px;width:600px;text-align:center;"><span id="t43">S</span></div>
<div style="left:995.9px;top:98px;width:1px;height:21px;background:#dedede;"></div>
<div style="top:101.30px;line-height:16px;font-size:12px;color:#606060;font-family:'Liberation Mono',monospace;white-space:pre;left:704.275px;width:600px;text-align:center;"><span id="t44">M</span></div>
<div style="left:1011.7px;top:98px;width:1px;height:21px;background:#dedede;"></div>
<div style="top:101.30px;line-height:16px;font-size:12px;color:#606060;font-family:'Liberation Mono',monospace;white-space:pre;left:720.125px;width:600px;text-align:center;"><span id="t45">T</span></div>
<div style="left:1027.5px;top:98px;width:1px;height:21px;background:#dedede;"></div>
<div style="top:101.30px;line-height:16px;font-size:12px;color:#606060;font-family:'Liberation Mono',monospace;white-space:pre;left:735.9749999999999px;width:600px;text-align:center;"><span id="t46">W</span></div>
<div style="left:1043.4px;top:98px;width:1px;height:21px;background:#dedede;"></div>
<div style="top:101.30px;line-height:16px;font-size:12px;color:#606060;font-family:'Liberation Mono',monospace;white-space:pre;left:751.825px;width:600px;text-align:center;"><span id="t47">T</span></div>
<div style="left:1059.2px;top:98px;width:1px;height:21px;background:#dedede;"></div>
<div style="top:101.30px;line-height:16px;font-size:12px;color:#606060;font-family:'Liberation Mono',monospace;white-space:pre;left:767.675px;width:600px;text-align:center;"><span id="t48">F</span></div>
<div style="left:1075.1px;top:98px;width:1px;height:21px;background:#dedede;"></div>
<div style="top:101.30px;line-height:16px;font-size:12px;color:#606060;font-family:'Liberation Mono',monospace;white-space:pre;left:783.5249999999999px;width:600px;text-align:center;"><span id="t49">S</span></div>
<div style="left:1091.0px;top:98px;width:1px;height:21px;background:#dedede;"></div>
<div style="top:101.30px;line-height:16px;font-size:12px;color:#606060;font-family:'Liberation Mono',monospace;white-space:pre;left:799.375px;width:600px;text-align:center;"><span id="t50">S</span></div>
<div style="left:1106.8px;top:98px;width:1px;height:21px;background:#dedede;"></div>
<div style="top:101.30px;line-height:16px;font-size:12px;color:#606060;font-family:'Liberation Mono',monospace;white-space:pre;left:815.2250000000001px;width:600px;text-align:center;"><span id="t51">M</span></div>
<div style="left:1122.7px;top:98px;width:1px;height:21px;background:#dedede;"></div>
<div style="top:101.30px;line-height:16px;font-size:12px;color:#606060;font-family:'Liberation Mono',monospace;white-space:pre;left:831.075px;width:600px;text-align:center;"><span id="t52">T</span></div>
<div style="left:1138.5px;top:98px;width:1px;height:21px;background:#dedede;"></div>
<div style="top:101.30px;line-height:16px;font-size:12px;color:#606060;font-family:'Liberation Mono',monospace;white-space:pre;left:846.925px;width:600px;text-align:center;"><span id="t53">W</span></div>
<div style="left:1154.3px;top:98px;width:1px;height:21px;background:#dedede;"></div>
<div style="top:101.30px;line-height:16px;font-size:12px;color:#606060;font-family:'Liberation Mono',monospace;white-space:pre;left:862.7749999999999px;width:600px;text-align:center;"><span id="t54">T</span></div>
<div style="left:1170.2px;top:98px;width:1px;height:21px;background:#dedede;"></div>
<div style="top:101.30px;line-height:16px;font-size:12px;color:#606060;font-family:'Liberation Mono',monospace;white-space:pre;left:878.625px;width:600px;text-align:center;"><span id="t55">F</span></div>
<div style="left:1186.1px;top:98px;width:1px;height:21px;background:#dedede;"></div>
<div style="top:101.30px;line-height:16px;font-size:12px;color:#606060;font-family:'Liberation Mono',monospace;white-space:pre;left:894.4750000000001px;width:600px;text-align:center;"><span id="t56">S</span></div>
<div style="left:1201.9px;top:98px;width:1px;height:21px;background:#dedede;"></div>
<div style="top:101.30px;line-height:16px;font-size:12px;color:#606060;font-family:'Liberation Mono',monospace;white-space:pre;left:910.325px;width:600px;text-align:center;"><span id="t57">S</span></div>
<div style="left:1217.8px;top:98px;width:1px;height:21px;background:#dedede;"></div>
<div style="top:101.30px;line-height:16px;font-size:12px;color:#606060;font-family:'Liberation Mono',monospace;white-space:pre;left:926.175px;width:600px;text-align:center;"><span id="t58">M</span></div>
<div style="left:1233.6px;top:98px;width:1px;height:21px;background:#dedede;"></div>
<div style="top:101.30px;line-height:16px;font-size:12px;color:#606060;font-family:'Liberation Mono',monospace;white-space:pre;left:942.0249999999999px;width:600px;text-align:center;"><span id="t59">T</span></div>
<div style="left:1249.5px;top:98px;width:1px;height:21px;background:#dedede;"></div>
<div style="top:101.30px;line-height:16px;font-size:12px;color:#606060;font-family:'Liberation Mono',monospace;white-space:pre;left:957.875px;width:600px;text-align:center;"><span id="t60">W</span></div>
<div style="left:1265.3px;top:98px;width:1px;height:21px;background:#dedede;"></div>
<div style="top:101.30px;line-height:16px;font-size:12px;color:#606060;font-family:'Liberation Mono',monospace;white-space:pre;left:973.7250000000001px;width:600px;text-align:center;"><span id="t61">T</span></div>
<div style="left:1281.2px;top:98px;width:1px;height:21px;background:#dedede;"></div>
<div style="top:101.30px;line-height:16px;font-size:12px;color:#606060;font-family:'Liberation Mono',monospace;white-space:pre;left:989.575px;width:600px;text-align:center;"><span id="t62">F</span></div>
<div style="left:1297.0px;top:98px;width:1px;height:21px;background:#dedede;"></div>
<div style="top:101.30px;line-height:16px;font-size:12px;color:#606060;font-family:'Liberation Mono',monospace;white-space:pre;left:1005.425px;width:600px;text-align:center;"><span id="t63">S</span></div>
<div style="left:1312.8px;top:98px;width:1px;height:21px;background:#dedede;"></div>
<div style="top:101.30px;line-height:16px;font-size:12px;color:#606060;font-family:'Liberation Mono',monospace;white-space:pre;left:1021.2749999999999px;width:600px;text-align:center;"><span id="t64">S</span></div>
<div style="left:1328.7px;top:98px;width:1px;height:21px;background:#dedede;"></div>
<div style="top:101.30px;line-height:16px;font-size:12px;color:#606060;font-family:'Liberation Mono',monospace;white-space:pre;left:1037.125px;width:600px;text-align:center;"><span id="t65">M</span></div>
<div style="left:1344.6px;top:98px;width:1px;height:21px;background:#dedede;"></div>
<div style="top:101.30px;line-height:16px;font-size:12px;color:#606060;font-family:'Liberation Mono',monospace;white-space:pre;left:1052.9750000000001px;width:600px;text-align:center;"><span id="t66">T</span></div>
<div style="left:1360.4px;top:98px;width:1px;height:21px;background:#dedede;"></div>
<div style="top:101.30px;line-height:16px;font-size:12px;color:#606060;font-family:'Liberation Mono',monospace;white-space:pre;left:1068.825px;width:600px;text-align:center;"><span id="t67">W</span></div>
<div style="left:1376.2px;top:98px;width:1px;height:21px;background:#dedede;"></div>
<div style="top:101.30px;line-height:16px;font-size:12px;color:#606060;font-family:'Liberation Mono',monospace;white-space:pre;left:1084.675px;width:600px;text-align:center;"><span id="t68">T</span></div>
<div style="left:1392.1px;top:98px;width:1px;height:21px;background:#dedede;"></div>
<div style="top:101.30px;line-height:16px;font-size:12px;color:#606060;font-family:'Liberation Mono',monospace;white-space:pre;left:1100.5249999999999px;width:600px;text-align:center;"><span id="t69">F</span></div>
<div style="left:1408.0px;top:98px;width:1px;height:21px;background:#dedede;"></div>
<div style="top:101.30px;line-height:16px;font-size:12px;color:#606060;font-family:'Liberation Mono',monospace;white-space:pre;left:1116.375px;width:600px;text-align:center;"><span id="t70">S</span></div>
<div style="left:1423.8px;top:98px;width:1px;height:21px;background:#dedede;"></div>
<div style="top:101.30px;line-height:16px;font-size:12px;color:#606060;font-family:'Liberation Mono',monospace;white-space:pre;left:1132.2250000000001px;width:600px;text-align:center;"><span id="t71">S</span></div>
<div style="left:978.9px;top:66px;width:2.4px;height:32px;background:#f6d970;"></div>
</div>
<div style="left:0px;top:0px;width:1556px;height:28px;background:#ffffff;"></div>
<svg width="26" height="26" style="left:0;top:0"><polygon points="13,3.8 13,20.2 4.9,12" fill="#55c8fc"/><polygon points="13,3.8 21.1,12 13,20.2" fill="#fb4646"/><polygon points="13,8.2 13,15.8 9.2,12" fill="#fb4646"/><polygon points="13,8.2 16.7,12 13,15.8" fill="#55c8fc"/></svg>
<div id="t72" style="top:5.00px;line-height:16px;font-size:12px;color:#000;font-family:'Liberation Sans',sans-serif;white-space:pre;letter-spacing:-0.336px;left:26px;">Steelray Delay Analyzer 0.17.0</div>
<div id="t73" style="top:6.00px;line-height:14px;font-size:11px;color:#000;font-family:'Liberation Sans',sans-serif;white-space:pre;left:186.5px;">◊</div>
<div id="t74" style="top:5.00px;line-height:16px;font-size:12px;color:#000;font-family:'Liberation Sans',sans-serif;white-space:pre;letter-spacing:-0.217px;left:200px;">Schenectady</div>
<svg width="120" height="28" style="left:1436px;top:0"><line x1="9" y1="12.5" x2="19.2" y2="12.5" stroke="#000" stroke-width="1"/><rect x="54.6" y="7.4" width="9.2" height="9.2" rx="1" fill="none" stroke="#000" stroke-width="1.1"/><path d="M100.2 7.2 L110 17 M110 7.2 L100.2 17" stroke="#000" stroke-width="1.1" fill="none"/></svg>
<div style="left:0px;top:28px;width:1556px;height:38px;background:#e3e3e3;border-top:1px solid #c8c8c8;"></div>
<div id="t75" style="top:39.50px;line-height:16px;font-size:12px;color:#555;font-family:'Liberation Sans',sans-serif;white-space:pre;letter-spacing:-0.463px;left:7px;">Data Set</div>
<div style="left:54px;top:35px;width:106px;height:23.5px;background:#f1f1f1;border:1px solid #c9c9c9;"></div>
<svg width="18" height="14" style="left:60px;top:40px" viewBox="0 0 18 14"><path d="M1 2.2 Q1 1 2.2 1 H5.6 L7 2.6 H12 Q13 2.6 13 3.6 V5 H4.6 Q3.8 5 3.4 5.8 L1 10.6 Z" fill="#a89a88"/><path d="M4.9 6 H16.6 Q17.4 6 17 6.8 L14.4 12 Q14 12.8 13.2 12.8 H1.6 Z" fill="#a89a88"/></svg>
<div id="t76" style="top:37.50px;line-height:18px;font-size:13.5px;color:#555;font-family:'Liberation Sans',sans-serif;white-space:pre;letter-spacing:-0.551px;left:81px;">Schenectady</div>
<div style="left:173.3px;top:37px;width:1.6px;height:19px;background:#a4a4a4;"></div>
<div style="left:189px;top:32px;width:409px;height:30px;background:#c8c8c8;border-radius:9px;"></div>
<div style="left:327px;top:34px;width:132px;height:26.5px;background:#f6f6f6;border-radius:9px;"></div>
<div style="top:37.90px;line-height:16px;font-size:12px;color:#6a6a6a;font-family:'Liberation Sans',sans-serif;white-space:pre;letter-spacing:-0.005px;left:-42.5px;width:600px;text-align:center;"><span id="t77">Report</span></div>
<div style="top:37.90px;line-height:16px;font-size:12px;color:#5b8a5e;font-family:'Liberation Sans',sans-serif;white-space:pre;letter-spacing:0.128px;left:93px;width:600px;text-align:center;"><span id="t78">Gantt</span></div>
<div style="top:37.90px;line-height:16px;font-size:12px;color:#6a6a6a;font-family:'Liberation Sans',sans-serif;white-space:pre;letter-spacing:0.283px;left:229.5px;width:600px;text-align:center;"><span id="t79">Network</span></div>
<div style="left:611.3px;top:37px;width:1.6px;height:19px;background:#a4a4a4;"></div>
<div id="t80" style="top:39.50px;line-height:16px;font-size:12px;color:#555;font-family:'Liberation Sans',sans-serif;white-space:pre;letter-spacing:-0.344px;left:626px;">Analysis Target</div>
<div style="left:707px;top:34.5px;width:281px;height:25.5px;background:#f4f4f4;border:1px solid #c9c9c9;"></div>
<div style="left:715px;top:40px;width:14px;height:14px;background:#ababab;border-radius:7px;"></div>
<div style="left:733px;top:39px;width:22px;height:16px;background:#dcdcdc;border-radius:2px;"></div>
<div id="t81" style="top:39.00px;line-height:16px;font-size:12px;color:#444;font-family:'Liberation Sans',sans-serif;white-space:pre;letter-spacing:-0.781px;left:736px;">FIN</div>
<div id="t82" style="top:39.00px;line-height:16px;font-size:12px;color:#333;font-family:'Liberation Sans',sans-serif;white-space:pre;letter-spacing:-0.147px;left:760px;">[Project Finish]</div>
<svg width="12" height="7" style="left:972.5px;top:44.5px"><polygon points="0,0 9.4,0 4.7,5.2" fill="#555"/></svg>
<div id="t83" style="top:39.50px;line-height:16px;font-size:12px;color:#555;font-family:'Liberation Sans',sans-serif;white-space:pre;letter-spacing:-0.358px;left:1000px;">Near-Critical:</div>
<div id="t84" style="top:39.50px;line-height:16px;font-size:12px;color:#444;font-family:'Liberation Sans',sans-serif;white-space:pre;letter-spacing:-0.340px;text-decoration:underline;left:1071px;">20 d</div>
<svg width="14" height="14" style="left:1098px;top:40px"><circle cx="7" cy="7" r="6.3" fill="#8a8a8a"/><path d="M4.6 4.6 L9.4 9.4 M9.4 4.6 L4.6 9.4" stroke="#e8e8e8" stroke-width="1.5"/></svg>
<div style="left:1px;top:70px;width:452px;height:850px;background:rgba(239,239,239,0.93);border:1px solid #e2e2e2;border-radius:3px;"></div>
<div id="t85" style="top:78.50px;line-height:16px;font-size:12px;color:#555;font-family:'Liberation Sans',sans-serif;white-space:pre;letter-spacing:-0.272px;left:8.3px;">Gantt</div>
<div style="left:45px;top:75.5px;width:72px;height:19.5px;background:#dcdcdc;border-radius:2px;"></div>
<svg width="1556" height="120" style="left:0;top:0"><circle cx="59" cy="85" r="4.46" fill="#828282"/><rect x="57.57" y="78.80" width="2.85" height="12.40" fill="#828282" transform="rotate(0 59 85)"/><rect x="57.57" y="78.80" width="2.85" height="12.40" fill="#828282" transform="rotate(45 59 85)"/><rect x="57.57" y="78.80" width="2.85" height="12.40" fill="#828282" transform="rotate(90 59 85)"/><rect x="57.57" y="78.80" width="2.85" height="12.40" fill="#828282" transform="rotate(135 59 85)"/><circle cx="59" cy="85" r="1.98" fill="#dcdcdc"/></svg>
<div id="t86" style="top:76.00px;line-height:17px;font-size:13px;color:#666;font-family:'Liberation Sans',sans-serif;white-space:pre;letter-spacing:-0.275px;left:69px;">options</div>
<div style="left:8px;top:98.7px;width:438.5px;height:814px;background:#fdfdfd;border:1px solid #cfcfcf;"></div>
<div style="left:9px;top:132px;width:437px;height:16px;background:rgba(223,215,204,0.06);"></div>
<div style="left:9px;top:172px;width:437px;height:16px;background:rgba(223,215,204,0.06);"></div>
<div style="left:233px;top:212px;width:213px;height:16px;background:rgba(223,215,204,0.1);"></div>
<div style="left:9px;top:292px;width:437px;height:16px;background:rgba(223,215,204,0.06);"></div>
<div style="left:249px;top:372px;width:197px;height:16px;background:rgba(223,215,204,0.06);"></div>
<div style="left:334px;top:412px;width:112px;height:16px;background:rgba(223,215,204,0.06);"></div>
<div style="left:357px;top:452px;width:89px;height:16px;background:rgba(223,215,204,0.06);"></div>
<div style="left:357px;top:492px;width:89px;height:16px;background:rgba(223,215,204,0.06);"></div>
<div style="left:234px;top:645.5px;width:212px;height:28.5px;background:rgba(220,227,220,0.12);border-top:2.4px solid rgba(249,150,74,0.10);border-bottom:2.4px solid rgba(249,150,74,0.10);"></div>
<svg width="1556" height="987" style="left:0;top:0;opacity:0.10"><polygon points="270.0,136.8 274.4,136.8 278.3,140.4 274.4,144.0 270.0,144.0 273.1,140.4" fill="#c89193"/><polygon points="285.0,136.8 289.4,136.8 293.3,140.4 289.4,144.0 285.0,144.0 288.1,140.4" fill="#c89193"/><polygon points="333.0,136.8 337.4,136.8 341.3,140.4 337.4,144.0 333.0,144.0 336.1,140.4" fill="#c89193"/><polygon points="349.0,136.8 353.4,136.8 357.3,140.4 353.4,144.0 349.0,144.0 352.1,140.4" fill="#c89193"/><polygon points="365.0,136.8 369.4,136.8 373.3,140.4 369.4,144.0 365.0,144.0 368.1,140.4" fill="#c89193"/><polygon points="381.0,136.8 385.4,136.8 389.3,140.4 385.4,144.0 381.0,144.0 384.1,140.4" fill="#c89193"/><polygon points="396.0,136.8 400.4,136.8 404.3,140.4 400.4,144.0 396.0,144.0 399.1,140.4" fill="#c89193"/><polygon points="270.0,216.8 274.4,216.8 278.3,220.4 274.4,224.0 270.0,224.0 273.1,220.4" fill="#c89193"/><polygon points="285.0,216.8 289.4,216.8 293.3,220.4 289.4,224.0 285.0,224.0 288.1,220.4" fill="#c89193"/><polygon points="333.0,216.8 337.4,216.8 341.3,220.4 337.4,224.0 333.0,224.0 336.1,220.4" fill="#c89193"/><polygon points="349.0,216.8 353.4,216.8 357.3,220.4 353.4,224.0 349.0,224.0 352.1,220.4" fill="#c89193"/><polygon points="365.0,216.8 369.4,216.8 373.3,220.4 369.4,224.0 365.0,224.0 368.1,220.4" fill="#c89193"/><polygon points="381.0,216.8 385.4,216.8 389.3,220.4 385.4,224.0 381.0,224.0 384.1,220.4" fill="#c89193"/><polygon points="396.0,216.8 400.4,216.8 404.3,220.4 400.4,224.0 396.0,224.0 399.1,220.4" fill="#c89193"/><polygon points="270.0,296.8 274.4,296.8 278.3,300.4 274.4,304.0 270.0,304.0 273.1,300.4" fill="#c89193"/><polygon points="285.0,296.8 289.4,296.8 293.3,300.4 289.4,304.0 285.0,304.0 288.1,300.4" fill="#c89193"/><polygon points="333.0,296.8 337.4,296.8 341.3,300.4 337.4,304.0 333.0,304.0 336.1,300.4" fill="#c89193"/><polygon points="349.0,296.8 353.4,296.8 357.3,300.4 353.4,304.0 349.0,304.0 352.1,300.4" fill="#c89193"/><polygon points="365.0,296.8 369.4,296.8 373.3,300.4 369.4,304.0 365.0,304.0 368.1,300.4" fill="#c89193"/><polygon points="381.0,296.8 385.4,296.8 389.3,300.4 385.4,304.0 381.0,304.0 384.1,300.4" fill="#c89193"/><polygon points="396.0,296.8 400.4,296.8 404.3,300.4 400.4,304.0 396.0,304.0 399.1,300.4" fill="#c89193"/><polygon points="270.0,376.8 274.4,376.8 278.3,380.4 274.4,384.0 270.0,384.0 273.1,380.4" fill="#c89193"/><polygon points="285.0,376.8 289.4,376.8 293.3,380.4 289.4,384.0 285.0,384.0 288.1,380.4" fill="#c89193"/><polygon points="333.0,376.8 337.4,376.8 341.3,380.4 337.4,384.0 333.0,384.0 336.1,380.4" fill="#c89193"/><polygon points="349.0,376.8 353.4,376.8 357.3,380.4 353.4,384.0 349.0,384.0 352.1,380.4" fill="#c89193"/><polygon points="365.0,376.8 369.4,376.8 373.3,380.4 369.4,384.0 365.0,384.0 368.1,380.4" fill="#c89193"/><polygon points="381.0,376.8 385.4,376.8 389.3,380.4 385.4,384.0 381.0,384.0 384.1,380.4" fill="#c89193"/><polygon points="396.0,376.8 400.4,376.8 404.3,380.4 400.4,384.0 396.0,384.0 399.1,380.4" fill="#c89193"/><polygon points="365.0,456.8 369.4,456.8 373.3,460.4 369.4,464.0 365.0,464.0 368.1,460.4" fill="#c89193"/><polygon points="381.0,456.8 385.4,456.8 389.3,460.4 385.4,464.0 381.0,464.0 384.1,460.4" fill="#c89193"/><polygon points="396.0,456.8 400.4,456.8 404.3,460.4 400.4,464.0 396.0,464.0 399.1,460.4" fill="#c89193"/><polygon points="365.0,496.8 369.4,496.8 373.3,500.4 369.4,504.0 365.0,504.0 368.1,500.4" fill="#fa4449"/><polygon points="381.0,496.8 385.4,496.8 389.3,500.4 385.4,504.0 381.0,504.0 384.1,500.4" fill="#fa4449"/><polygon points="396.0,496.8 400.4,496.8 404.3,500.4 400.4,504.0 396.0,504.0 399.1,500.4" fill="#fa4449"/></svg>
<div style="left:8px;top:98.7px;width:438.5px;height:20.3px;background:#e3e3e3;border:1px solid #c6c6c6;"></div>
<div style="left:107px;top:99.7px;width:1px;height:18.8px;background:#c6c6c6;"></div>
<div id="t87" style="top:102.80px;line-height:15px;font-size:11.5px;color:#555;font-family:'Liberation Sans',sans-serif;white-space:pre;letter-spacing:-0.193px;left:14px;">Activity ID</div>
<div id="t88" style="top:102.80px;line-height:15px;font-size:11.5px;color:#555;font-family:'Liberation Sans',sans-serif;white-space:pre;letter-spacing:-0.254px;left:113px;">Activity Name</div>
<div id="t89" style="top:131.50px;line-height:17px;font-size:13px;color:#333;font-family:'Liberation Sans',sans-serif;white-space:pre;letter-spacing:-0.767px;left:19px;-webkit-text-stroke:0.55px #333;">UDC.1108B</div>
<div id="t90" style="top:131.50px;line-height:17px;font-size:13px;color:#333;font-family:'Liberation Sans',sans-serif;white-space:pre;letter-spacing:-0.148px;left:129.3px;-webkit-text-stroke:0.55px #333;">Schenectady Jan 2012 Update (Progress &amp; NPNRs)</div>
<div style="left:9px;top:159px;width:436.5px;height:1px;background:#d4d4d4;"></div>
<div id="t91" style="top:171.50px;line-height:17px;font-size:13px;color:#333;font-family:'Liberation Sans',sans-serif;white-space:pre;letter-spacing:-0.431px;left:19px;-webkit-text-stroke:0.55px #333;">AD</div>
<div id="t92" style="top:171.50px;line-height:17px;font-size:13px;color:#333;font-family:'Liberation Sans',sans-serif;white-space:pre;letter-spacing:0.266px;left:147.45000000000002px;-webkit-text-stroke:0.55px #333;">Administration &amp; Milestones</div>
<div style="left:9px;top:199px;width:436.5px;height:1px;background:#d4d4d4;"></div>
<div id="t93" style="top:211.50px;line-height:17px;font-size:13px;color:#333;font-family:'Liberation Sans',sans-serif;white-space:pre;letter-spacing:-0.791px;left:19px;-webkit-text-stroke:0.55px #333;">CN</div>
<div id="t94" style="top:211.50px;line-height:17px;font-size:13px;color:#333;font-family:'Liberation Sans',sans-serif;white-space:pre;letter-spacing:0.201px;left:147.45000000000002px;-webkit-text-stroke:0.55px #333;">Construction</div>
<div style="left:9px;top:239px;width:436.5px;height:1px;background:#d4d4d4;"></div>
<div id="t95" style="top:251.50px;line-height:17px;font-size:13px;color:#333;font-family:'Liberation Sans',sans-serif;white-space:pre;letter-spacing:-1.634px;left:19px;-webkit-text-stroke:0.55px #333;">01</div>
<div id="t96" style="top:251.50px;line-height:17px;font-size:13px;color:#333;font-family:'Liberation Sans',sans-serif;white-space:pre;letter-spacing:0.165px;left:165.60000000000002px;-webkit-text-stroke:0.55px #333;">Vertical Construction</div>
<div style="left:9px;top:279px;width:436.5px;height:1px;background:#d4d4d4;"></div>
<div id="t97" style="top:291.50px;line-height:17px;font-size:13px;color:#333;font-family:'Liberation Sans',sans-serif;white-space:pre;letter-spacing:-2.112px;left:19px;-webkit-text-stroke:0.55px #333;">ST</div>
<div id="t98" style="top:291.50px;line-height:17px;font-size:13px;color:#333;font-family:'Liberation Sans',sans-serif;white-space:pre;letter-spacing:0.120px;left:165.60000000000002px;-webkit-text-stroke:0.55px #333;">Demolition, Remediation, Sitework and Foun...</div>
<div style="left:9px;top:319px;width:436.5px;height:1px;background:#d4d4d4;"></div>
<div id="t99" style="top:331.50px;line-height:17px;font-size:13px;color:#333;font-family:'Liberation Sans',sans-serif;white-space:pre;letter-spacing:-1.281px;left:19px;-webkit-text-stroke:0.55px #333;">DE</div>
<div id="t100" style="top:331.50px;line-height:17px;font-size:13px;color:#333;font-family:'Liberation Sans',sans-serif;white-space:pre;letter-spacing:0.388px;left:183.75px;-webkit-text-stroke:0.55px #333;">Demolition</div>
<div style="left:9px;top:359px;width:436.5px;height:1px;background:#d4d4d4;"></div>
<div id="t101" style="top:371.50px;line-height:17px;font-size:13px;color:#333;font-family:'Liberation Sans',sans-serif;white-space:pre;letter-spacing:-2.112px;left:19px;-webkit-text-stroke:0.55px #333;">ST</div>
<div id="t102" style="top:371.50px;line-height:17px;font-size:13px;color:#333;font-family:'Liberation Sans',sans-serif;white-space:pre;letter-spacing:0.105px;left:183.75px;-webkit-text-stroke:0.55px #333;">Sitework</div>
<div style="left:9px;top:399px;width:436.5px;height:1px;background:#d4d4d4;"></div>
<div id="t103" style="top:411.50px;line-height:17px;font-size:13px;color:#333;font-family:'Liberation Sans',sans-serif;white-space:pre;letter-spacing:-1.648px;left:19px;-webkit-text-stroke:0.55px #333;">GE</div>
<div id="t104" style="top:411.50px;line-height:17px;font-size:13px;color:#333;font-family:'Liberation Sans',sans-serif;white-space:pre;letter-spacing:-0.179px;left:201.9px;-webkit-text-stroke:0.55px #333;">General</div>
<div style="left:9px;top:439px;width:436.5px;height:1px;background:#d4d4d4;"></div>
<div id="t105" style="top:451.50px;line-height:17px;font-size:13px;color:#333;font-family:'Liberation Sans',sans-serif;white-space:pre;letter-spacing:-1.250px;left:19px;-webkit-text-stroke:0.55px #333;">CO</div>
<div id="t106" style="top:451.50px;line-height:17px;font-size:13px;color:#333;font-family:'Liberation Sans',sans-serif;white-space:pre;letter-spacing:-0.068px;left:201.9px;-webkit-text-stroke:0.55px #333;">Delays and Change Orders</div>
<div style="left:9px;top:479px;width:436.5px;height:1px;background:#d4d4d4;"></div>
<div id="t107" style="top:491.50px;line-height:17px;font-size:13px;color:#333;font-family:'Liberation Sans',sans-serif;white-space:pre;letter-spacing:-1.286px;left:19px;-webkit-text-stroke:0.55px #333;">C01</div>
<div id="t108" style="top:491.50px;line-height:17px;font-size:13px;color:#333;font-family:'Liberation Sans',sans-serif;white-space:pre;letter-spacing:-0.029px;left:220.05px;-webkit-text-stroke:0.55px #333;">PCO #01 Telecommunications Ductb...</div>
<div style="left:9px;top:519px;width:436.5px;height:1px;background:#d4d4d4;"></div>
<div id="t109" style="top:531.50px;line-height:17px;font-size:13px;color:#444;font-family:'Liberation Sans',sans-serif;white-space:pre;letter-spacing:-0.264px;left:19px;">C01-1000</div>
<div id="t110" style="top:531.50px;line-height:17px;font-size:13px;color:#444;font-family:'Liberation Sans',sans-serif;white-space:pre;letter-spacing:-0.155px;left:238.2px;">CO#01 Discovery of Ductbank (NIC)</div>
<div style="left:9px;top:559px;width:436.5px;height:1px;background:#d4d4d4;"></div>
<div id="t111" style="top:571.50px;line-height:17px;font-size:13px;color:#444;font-family:'Liberation Sans',sans-serif;white-space:pre;letter-spacing:-0.264px;left:19px;">C01-1010</div>
<div id="t112" style="top:571.50px;line-height:17px;font-size:13px;color:#444;font-family:'Liberation Sans',sans-serif;white-space:pre;letter-spacing:-0.035px;left:238.2px;">CO#01 Notify Owner</div>
<div style="left:9px;top:599px;width:436.5px;height:1px;background:#d4d4d4;"></div>
<div id="t113" style="top:611.50px;line-height:17px;font-size:13px;color:#444;font-family:'Liberation Sans',sans-serif;white-space:pre;letter-spacing:-0.264px;left:19px;">C01-1020</div>
<div id="t114" style="top:611.50px;line-height:17px;font-size:13px;color:#444;font-family:'Liberation Sans',sans-serif;white-space:pre;letter-spacing:-0.201px;left:238.2px;">CO#01 Resolution Time</div>
<div style="left:9px;top:639px;width:436.5px;height:1px;background:#d4d4d4;"></div>
<div id="t115" style="top:651.50px;line-height:17px;font-size:13px;color:#444;font-family:'Liberation Sans',sans-serif;white-space:pre;letter-spacing:-0.264px;left:19px;">C01-1030</div>
<div id="t116" style="top:651.50px;line-height:17px;font-size:13px;color:#444;font-family:'Liberation Sans',sans-serif;white-space:pre;letter-spacing:-0.074px;left:238.2px;">CO#01 Added Work</div>
<div style="left:9px;top:679px;width:436.5px;height:1px;background:#d4d4d4;"></div>
<div id="t117" style="top:691.50px;line-height:17px;font-size:13px;color:#444;font-family:'Liberation Sans',sans-serif;white-space:pre;letter-spacing:-0.264px;left:19px;">C01-1040</div>
<div id="t118" style="top:691.50px;line-height:17px;font-size:13px;color:#444;font-family:'Liberation Sans',sans-serif;white-space:pre;letter-spacing:-0.034px;left:238.2px;">CO#01 Added Work Complete</div>
<div style="left:9px;top:719px;width:436.5px;height:1px;background:#d4d4d4;"></div>
<div style="left:9px;top:720px;width:436.5px;height:39.5px;background:#eef0ee;"></div>
<div id="t119" style="top:731.50px;line-height:17px;font-size:13px;color:#9a9a9a;font-family:'Liberation Sans',sans-serif;white-space:pre;letter-spacing:-0.753px;left:19px;-webkit-text-stroke:0.55px #9a9a9a;">C02</div>
<div id="t120" style="top:731.50px;line-height:17px;font-size:13px;color:#9a9a9a;font-family:'Liberation Sans',sans-serif;white-space:pre;letter-spacing:-0.019px;left:220.05px;-webkit-text-stroke:0.55px #9a9a9a;">PCO #02 Archaeological Discovery (...</div>
<div style="left:9px;top:759px;width:436.5px;height:1px;background:#d4d4d4;"></div>
<div id="t121" style="top:771.50px;line-height:17px;font-size:13px;color:#444;font-family:'Liberation Sans',sans-serif;white-space:pre;letter-spacing:-0.718px;left:19px;">FIN</div>
<div id="t122" style="top:771.50px;line-height:17px;font-size:13px;color:#444;font-family:'Liberation Sans',sans-serif;white-space:pre;letter-spacing:-0.155px;left:130.2px;">[Project Finish]</div>
<div style="left:9px;top:799px;width:436.5px;height:1px;background:#d4d4d4;"></div>
<svg width="1556" height="987" style="left:0;top:0"><rect x="110.9" y="139.1" width="10.4" height="1.9" fill="#8a8a8a"/><rect x="129.1" y="179.1" width="10.4" height="1.9" fill="#8a8a8a"/><rect x="133.3" y="174.8" width="1.9" height="10.4" fill="#8a8a8a"/><rect x="129.1" y="219.1" width="10.4" height="1.9" fill="#8a8a8a"/><rect x="147.2" y="259.1" width="10.4" height="1.9" fill="#8a8a8a"/><rect x="151.5" y="254.8" width="1.9" height="10.4" fill="#8a8a8a"/><rect x="147.2" y="299.1" width="10.4" height="1.9" fill="#8a8a8a"/><rect x="165.4" y="339.1" width="10.4" height="1.9" fill="#8a8a8a"/><rect x="169.6" y="334.8" width="1.9" height="10.4" fill="#8a8a8a"/><rect x="165.4" y="379.1" width="10.4" height="1.9" fill="#8a8a8a"/><rect x="183.5" y="419.1" width="10.4" height="1.9" fill="#8a8a8a"/><rect x="187.8" y="414.8" width="1.9" height="10.4" fill="#8a8a8a"/><rect x="183.5" y="459.1" width="10.4" height="1.9" fill="#8a8a8a"/><rect x="201.7" y="499.1" width="10.4" height="1.9" fill="#8a8a8a"/><rect x="201.7" y="739.1" width="10.4" height="1.9" fill="#aaa"/><rect x="205.9" y="734.8" width="1.9" height="10.4" fill="#aaa"/></svg>
<div style="left:447.7px;top:487.4px;width:1.6px;height:1.6px;background:#5a5a5a;border-radius:0.8px;"></div>
<div style="left:447.7px;top:493.29999999999995px;width:1.6px;height:1.6px;background:#5a5a5a;border-radius:0.8px;"></div>
<div style="left:447.7px;top:499.2px;width:1.6px;height:1.6px;background:#5a5a5a;border-radius:0.8px;"></div>
<div style="left:572.5px;top:909.7px;width:25.8px;height:8.6px;background:#dadada;border-radius:4.3px;"></div>
<div style="left:0.5px;top:924.5px;width:1100.5px;height:61.5px;background:#f0f0f0;border:1px solid #e4e4e4;border-radius:3px;"></div>
<div id="t123" style="top:930.20px;line-height:14px;font-size:11px;color:#666;font-family:'Liberation Sans',sans-serif;white-space:pre;letter-spacing:0.041px;left:283px;">Data Date:</div>
<div id="t124" style="top:927.60px;line-height:18px;font-size:14px;color:#333;font-family:'Liberation Sans',sans-serif;white-space:pre;letter-spacing:-0.450px;left:362px;">Sun, Jan 29, 2012</div>
<div id="t125" style="top:927.60px;line-height:18px;font-size:14px;color:#333;font-family:'Liberation Sans',sans-serif;white-space:pre;letter-spacing:-0.344px;left:497px;">at</div>
<div id="t126" style="top:927.60px;line-height:18px;font-size:14px;color:#333;font-family:'Liberation Sans',sans-serif;white-space:pre;letter-spacing:-0.258px;left:533px;">12am</div>
<div id="t127" style="top:930.20px;line-height:14px;font-size:11px;color:#666;font-family:'Liberation Sans',sans-serif;white-space:pre;letter-spacing:-0.002px;left:604px;">Target Finish:</div>
<div id="t128" style="top:927.60px;line-height:18px;font-size:14px;color:#333;font-family:'Liberation Sans',sans-serif;white-space:pre;letter-spacing:-0.100px;left:678px;">Wed, Apr 17, 2013 at 5pm</div>
<svg width="1556" height="987" style="left:0;top:0"><polygon points="351.5,932.8 349.3,936.6 351.5,940.4 344,936.6" fill="#8a8a8a"/><polygon points="526.5,932.8 524.3,936.6 526.5,940.4 519,936.6" fill="#8a8a8a"/><polygon points="478,932.8 480.2,936.6 478,940.4 485.5,936.6" fill="#8a8a8a"/><polygon points="572,932.8 574.2,936.6 572,940.4 579.5,936.6" fill="#8a8a8a"/></svg>
<div style="left:16px;top:950.8px;width:1070.5px;height:31px;background:#ffffff;border:1px solid #bdbdbd;"></div>
<div style="left:230px;top:951.8px;width:2px;height:29px;background:#f3d35f;"></div>
<div style="left:746px;top:951.8px;width:10px;height:29px;background:linear-gradient(90deg,rgba(120,200,240,0),rgba(120,200,240,0.35));"></div>
<div style="left:755px;top:951.8px;width:1.5px;height:29px;background:#4fb4e8;"></div>
<div style="left:759.5px;top:70px;width:342.5px;height:31.5px;background:rgba(240,240,240,0.84);border:1px solid #e2e2e2;border-radius:3px;"></div>
<div style="left:767.5px;top:79.5px;width:13px;height:12.5px;background:#fff;border:1px solid #555;"></div>
<svg width="14" height="14" style="left:767px;top:79px"><polyline points="3,7 5.8,10 11,3.4" fill="none" stroke="#111" stroke-width="1.7"/></svg>
<div id="t129" style="top:78.00px;line-height:16px;font-size:12px;color:#f08a4a;font-family:'Liberation Sans',sans-serif;white-space:pre;letter-spacing:-0.336px;left:785px;">Find</div>
<div style="left:814px;top:73.5px;width:280px;height:25px;background:rgba(251,251,251,0.80);border:1px solid #d2d2d2;"></div>
<div style="left:821.4px;top:78.8px;width:14px;height:14px;background:#ababab;border-radius:7px;"></div>
<div style="left:839.5px;top:77.5px;width:55.5px;height:16.5px;background:#dddddd;border-radius:2px;"></div>
<div id="t130" style="top:77.70px;line-height:16px;font-size:12px;color:#444;font-family:'Liberation Sans',sans-serif;white-space:pre;letter-spacing:-0.340px;left:842px;">C01-1030</div>
<div id="t131" style="top:77.70px;line-height:16px;font-size:12px;color:#222;font-family:'Liberation Sans',sans-serif;white-space:pre;letter-spacing:-0.032px;left:898.5px;">CO#01 Added Work</div>
<svg width="12" height="7" style="left:1078.6px;top:83.3px"><polygon points="0,0 9.6,0 4.8,5.3" fill="#555"/></svg>
<div style="left:1105px;top:70px;width:460px;height:516.6px;background:rgba(239,239,239,0.90);border:1px solid #dcdcdc;border-radius:3px;"></div>
<div id="t132" style="top:78.00px;line-height:16px;font-size:12px;color:#555;font-family:'Liberation Sans',sans-serif;white-space:pre;letter-spacing:-0.301px;left:1112px;">Timeline</div>
<div style="left:1163px;top:74.7px;width:64.7px;height:21px;background:#efefef;border:1px solid #b4b4b4;"></div>
<div id="t133" style="top:76.80px;line-height:17px;font-size:13px;color:#222;font-family:'Liberation Sans',sans-serif;white-space:pre;letter-spacing:-0.898px;left:1169px;">Weekly</div>
<svg width="8" height="6" style="left:1215px;top:82.5px"><polyline points="0.5,0.8 3.5,4 6.5,0.8" fill="none" stroke="#555" stroke-width="1.2"/></svg>
<div style="left:1112.4px;top:99.4px;width:443.0px;height:448.2px;overflow:hidden;background:rgba(255,255,255,0.91);border:1px solid #d4d4d4;border-top-color:#c2c2c2;border-bottom-color:#cdcdcd;">
<div style="left:0.0px;top:211.20000000000002px;width:425px;height:24.5px;background:#eaeaea;"></div>
<div style="left:0.0px;top:384.79999999999995px;width:425px;height:24.4px;background:#f8e49b;"></div>
<svg width="443.0" height="448.2" style="left:0;top:0"><rect x="5.6" y="-4.3" width="16.5" height="11.5" rx="1.8" fill="#8e8e8e"/><rect x="10.1" y="-6.8" width="7.5" height="4" rx="1" fill="#8e8e8e"/><circle cx="13.85" cy="1.5000000000000009" r="3.6" fill="#f4f4f4"/><circle cx="13.85" cy="1.5000000000000009" r="2.2" fill="#8e8e8e"/><circle cx="14.2" cy="25.4" r="7.0" fill="#fbfbfb" stroke="#787878" stroke-width="2.3"/><polyline points="14.2,21.5 14.2,25.7 10.7,25.7" fill="none" stroke="#787878" stroke-width="1.3"/><polygon points="326.1,16.7 410.5,16.7 418.0,24.7 410.5,32.7 326.1,32.7 318.6,24.7" fill="#f6f5f0" stroke="#ebe9df" stroke-width="1" opacity="1"/><circle cx="14.2" cy="50.2" r="7.0" fill="#fbfbfb" stroke="#787878" stroke-width="2.3"/><polyline points="14.2,46.4 14.2,50.5 10.7,50.5" fill="none" stroke="#787878" stroke-width="1.3"/><polygon points="326.1,41.5 410.5,41.5 418.0,49.5 410.5,57.5 326.1,57.5 318.6,49.5" fill="#f6f5f0" stroke="#ebe9df" stroke-width="1" opacity="1"/><circle cx="14.2" cy="75.0" r="7.0" fill="#fbfbfb" stroke="#787878" stroke-width="2.3"/><polyline points="14.2,71.2 14.2,75.3 10.7,75.3" fill="none" stroke="#787878" stroke-width="1.3"/><polygon points="326.1,66.3 410.5,66.3 418.0,74.3 410.5,82.3 326.1,82.3 318.6,74.3" fill="#f6f5f0" stroke="#ebe9df" stroke-width="1" opacity="1"/><polyline points="325.8,66.7 319.40000000000003,74.3 325.8,81.89999999999999" fill="none" stroke="#58c4f8" stroke-width="1.5" opacity="1"/><rect x="365.8" y="68.8" width="1.7" height="11" fill="#58c4f8"/><circle cx="14.2" cy="99.8" r="7.0" fill="#fbfbfb" stroke="#787878" stroke-width="2.3"/><polyline points="14.2,96.0 14.2,100.1 10.7,100.1" fill="none" stroke="#787878" stroke-width="1.3"/><polygon points="326.1,91.1 410.5,91.1 418.0,99.1 410.5,107.1 326.1,107.1 318.6,99.1" fill="#f6f5f0" stroke="#ebe9df" stroke-width="1" opacity="1"/><polyline points="410.8,91.5 417.2,99.1 410.8,106.69999999999999" fill="none" stroke="#fb5252" stroke-width="1.5" opacity="1"/><rect x="367.9" y="93.6" width="1.7" height="11" fill="#fb5252" opacity="1"/><circle cx="14.2" cy="124.5" r="7.0" fill="#fbfbfb" stroke="#787878" stroke-width="2.3"/><polyline points="14.2,120.7 14.2,124.8 10.7,124.8" fill="none" stroke="#787878" stroke-width="1.3"/><polygon points="326.1,115.8 410.5,115.8 418.0,123.8 410.5,131.8 326.1,131.8 318.6,123.8" fill="#f6f5f0" stroke="#ebe9df" stroke-width="1" opacity="1"/><polyline points="410.8,116.2 417.2,123.8 410.8,131.4" fill="none" stroke="#fb5252" stroke-width="1.5" opacity="1"/><rect x="367.9" y="118.3" width="1.7" height="11" fill="#fb5252" opacity="1"/><circle cx="14.2" cy="149.2" r="7.0" fill="#fbfbfb" stroke="#787878" stroke-width="2.3"/><polyline points="14.2,145.3 14.2,149.5 10.7,149.5" fill="none" stroke="#787878" stroke-width="1.3"/><polygon points="326.1,140.5 410.5,140.5 418.0,148.5 410.5,156.5 326.1,156.5 318.6,148.5" fill="#f6f5f0" stroke="#ebe9df" stroke-width="1" opacity="1"/><polyline points="410.8,140.9 417.2,148.5 410.8,156.1" fill="none" stroke="#fb5252" stroke-width="1.5" opacity="1"/><rect x="368.1" y="143.0" width="24.5" height="11" fill="#fb5252"/><circle cx="14.2" cy="174.0" r="7.0" fill="#fbfbfb" stroke="#787878" stroke-width="2.3"/><polyline points="14.2,170.2 14.2,174.3 10.7,174.3" fill="none" stroke="#787878" stroke-width="1.3"/><polygon points="326.1,165.3 410.5,165.3 418.0,173.3 410.5,181.3 326.1,181.3 318.6,173.3" fill="#f6f5f0" stroke="#ebe9df" stroke-width="1" opacity="1"/><g transform="translate(5.1,190.3)"><polygon points="1.9,11.6 11.3,2.2 15.0,5.9 5.6,15.3" fill="#8e8e8e"/><path d="M12.2 1.3 L13.6 -0.1 Q14.5 -0.9 15.4 -0.1 L17.3 1.8 Q18.1 2.7 17.3 3.6 L15.9 5 Z" fill="#8e8e8e"/><polygon points="1.3,12.6 4.6,15.9 0.2,17.1" fill="#8e8e8e"/></g><rect x="29.9" y="197.9" width="10.4" height="1.7" fill="#8a8a8a"/><rect x="34.2" y="193.6" width="1.7" height="10.4" fill="#8a8a8a"/><polygon points="326.1,190.1 410.5,190.1 418.0,198.1 410.5,206.1 326.1,206.1 318.6,198.1" fill="#f6f5f0" stroke="#ebe9df" stroke-width="1" opacity="1"/><polyline points="325.8,190.5 319.40000000000003,198.1 325.8,205.7" fill="none" stroke="#58c4f8" stroke-width="1.5" opacity="1"/><rect x="326.8" y="192.6" width="41.2" height="11" fill="#58c4f8"/><rect x="9.4" y="222.5" width="10.4" height="1.7" fill="#9a9a9a"/><polygon points="326.1,214.7 410.5,214.7 418.0,222.7 410.5,230.7 326.1,230.7 318.6,222.7" fill="#e8e7e4" stroke="#e4e3df" stroke-width="1" opacity="1"/><polyline points="410.8,215.1 417.2,222.7 410.8,230.29999999999998" fill="none" stroke="#fb5252" stroke-width="1.5" opacity="0.45"/><rect x="367.9" y="217.2" width="1.7" height="11" fill="#fb5252" opacity="0.45"/><rect x="5.6" y="243.5" width="16.5" height="11.5" rx="1.8" fill="#8e8e8e"/><rect x="10.1" y="241.0" width="7.5" height="4" rx="1" fill="#8e8e8e"/><circle cx="13.85" cy="249.3" r="3.6" fill="#f4f4f4"/><circle cx="13.85" cy="249.3" r="2.2" fill="#8e8e8e"/><circle cx="14.2" cy="273.4" r="7.0" fill="#fbfbfb" stroke="#787878" stroke-width="2.3"/><polyline points="14.2,269.5 14.2,273.7 10.7,273.7" fill="none" stroke="#787878" stroke-width="1.3"/><polygon points="326.1,264.7 410.5,264.7 418.0,272.7 410.5,280.7 326.1,280.7 318.6,272.7" fill="#f6f5f0" stroke="#ebe9df" stroke-width="1" opacity="1"/><circle cx="14.2" cy="298.2" r="7.0" fill="#fbfbfb" stroke="#787878" stroke-width="2.3"/><polyline points="14.2,294.3 14.2,298.5 10.7,298.5" fill="none" stroke="#787878" stroke-width="1.3"/><polygon points="326.1,289.5 410.5,289.5 418.0,297.5 410.5,305.5 326.1,305.5 318.6,297.5" fill="#f6f5f0" stroke="#ebe9df" stroke-width="1" opacity="1"/><circle cx="14.2" cy="323.0" r="7.0" fill="#fbfbfb" stroke="#787878" stroke-width="2.3"/><polyline points="14.2,319.1 14.2,323.3 10.7,323.3" fill="none" stroke="#787878" stroke-width="1.3"/><polygon points="326.1,314.3 410.5,314.3 418.0,322.3 410.5,330.3 326.1,330.3 318.6,322.3" fill="#f6f5f0" stroke="#ebe9df" stroke-width="1" opacity="1"/><circle cx="14.2" cy="347.8" r="7.0" fill="#fbfbfb" stroke="#787878" stroke-width="2.3"/><polyline points="14.2,343.9 14.2,348.1 10.7,348.1" fill="none" stroke="#787878" stroke-width="1.3"/><polygon points="326.1,339.1 410.5,339.1 418.0,347.1 410.5,355.1 326.1,355.1 318.6,347.1" fill="#f6f5f0" stroke="#ebe9df" stroke-width="1" opacity="1"/><polyline points="410.8,339.5 417.2,347.1 410.8,354.70000000000005" fill="none" stroke="#fb5252" stroke-width="1.5" opacity="1"/><rect x="367.9" y="341.6" width="1.7" height="11" fill="#fb5252" opacity="1"/><circle cx="14.2" cy="372.4" r="7.0" fill="#fbfbfb" stroke="#787878" stroke-width="2.3"/><polyline points="14.2,368.5 14.2,372.7 10.7,372.7" fill="none" stroke="#787878" stroke-width="1.3"/><polygon points="326.1,363.7 410.5,363.7 418.0,371.7 410.5,379.7 326.1,379.7 318.6,371.7" fill="#f6f5f0" stroke="#ebe9df" stroke-width="1" opacity="1"/><polyline points="410.8,364.09999999999997 417.2,371.7 410.8,379.3" fill="none" stroke="#fb5252" stroke-width="1.5" opacity="1"/><rect x="367.9" y="366.2" width="1.7" height="11" fill="#fb5252" opacity="1"/><circle cx="14.2" cy="397.1" r="7.0" fill="#fbfbfb" stroke="#787878" stroke-width="2.3"/><polyline points="14.2,393.2 14.2,397.40000000000003 10.7,397.40000000000003" fill="none" stroke="#787878" stroke-width="1.3"/><polygon points="326.1,388.4 410.5,388.4 418.0,396.4 410.5,404.4 326.1,404.4 318.6,396.4" fill="#f7eec9" stroke="#f3e7b4" stroke-width="1" opacity="1"/><polyline points="325.8,388.79999999999995 319.40000000000003,396.4 325.8,404.0" fill="none" stroke="#58c4f8" stroke-width="1.5" opacity="1"/><rect x="365.8" y="390.9" width="1.7" height="11" fill="#58c4f8"/><circle cx="14.2" cy="422.0" r="7.0" fill="#fbfbfb" stroke="#787878" stroke-width="2.3"/><polyline points="14.2,418.1 14.2,422.3 10.7,422.3" fill="none" stroke="#787878" stroke-width="1.3"/><polygon points="326.1,413.3 410.5,413.3 418.0,421.3 410.5,429.3 326.1,429.3 318.6,421.3" fill="#f6f5f0" stroke="#ebe9df" stroke-width="1" opacity="1"/><g transform="translate(5.1,438.3)"><polygon points="1.9,11.6 11.3,2.2 15.0,5.9 5.6,15.3" fill="#8e8e8e"/><path d="M12.2 1.3 L13.6 -0.1 Q14.5 -0.9 15.4 -0.1 L17.3 1.8 Q18.1 2.7 17.3 3.6 L15.9 5 Z" fill="#8e8e8e"/><polygon points="1.3,12.6 4.6,15.9 0.2,17.1" fill="#8e8e8e"/></g><rect x="29.9" y="445.9" width="10.4" height="1.7" fill="#8a8a8a"/><rect x="34.2" y="441.6" width="1.7" height="10.4" fill="#8a8a8a"/><polygon points="326.1,438.1 410.5,438.1 418.0,446.1 410.5,454.1 326.1,454.1 318.6,446.1" fill="#f6f5f0" stroke="#ebe9df" stroke-width="1" opacity="1"/><polyline points="325.8,438.5 319.40000000000003,446.1 325.8,453.70000000000005" fill="none" stroke="#58c4f8" stroke-width="1.5" opacity="1"/><rect x="365.8" y="440.6" width="1.7" height="11" fill="#58c4f8"/></svg>
<div id="t134" style="top:-7.90px;line-height:19px;font-size:14.5px;color:#222;font-family:'Liberation Sans',sans-serif;white-space:pre;letter-spacing:-0.339px;left:26.3px;">Start of Period</div>
<div id="t135" style="top:16.70px;line-height:19px;font-size:14.5px;color:#222;font-family:'Liberation Sans',sans-serif;white-space:pre;letter-spacing:-0.541px;left:26.8px;">Scheduling Mode: P6 → SDA</div>
<div id="t136" style="top:41.50px;line-height:19px;font-size:14.5px;color:#222;font-family:'Liberation Sans',sans-serif;white-space:pre;letter-spacing:-0.696px;left:26.8px;">Thu, 12/1</div>
<div id="t137" style="top:66.30px;line-height:19px;font-size:14.5px;color:#222;font-family:'Liberation Sans',sans-serif;white-space:pre;letter-spacing:-0.453px;left:26.8px;">Sun, 12/4</div>
<div id="t138" style="top:66.70px;line-height:14px;font-size:11px;color:#666;font-family:'Liberation Sans',sans-serif;white-space:pre;letter-spacing:-0.232px;left:370.6px;">7 d</div>
<div id="t139" style="top:91.10px;line-height:19px;font-size:14.5px;color:#222;font-family:'Liberation Sans',sans-serif;white-space:pre;letter-spacing:-0.808px;left:26.8px;">Sun, 12/11</div>
<div id="t140" style="top:91.50px;line-height:14px;font-size:11px;color:#666;font-family:'Liberation Sans',sans-serif;white-space:pre;letter-spacing:-0.299px;left:350.9px;">2 d</div>
<div id="t141" style="top:115.80px;line-height:19px;font-size:14.5px;color:#222;font-family:'Liberation Sans',sans-serif;white-space:pre;letter-spacing:-0.716px;left:26.8px;">Sun, 12/18</div>
<div id="t142" style="top:116.20px;line-height:14px;font-size:11px;color:#666;font-family:'Liberation Sans',sans-serif;white-space:pre;letter-spacing:-0.299px;left:350.9px;">7 d</div>
<div id="t143" style="top:140.50px;line-height:19px;font-size:14.5px;color:#222;font-family:'Liberation Sans',sans-serif;white-space:pre;letter-spacing:-0.516px;left:26.8px;">Sun, 12/25</div>
<div id="t144" style="top:140.90px;line-height:14px;font-size:11px;color:#666;font-family:'Liberation Sans',sans-serif;white-space:pre;letter-spacing:-0.580px;left:346.2px;">97 d</div>
<div id="t145" style="top:165.30px;line-height:19px;font-size:14.5px;color:#222;font-family:'Liberation Sans',sans-serif;white-space:pre;letter-spacing:-0.509px;left:26.8px;">Scheduling Mode: SDA → P6</div>
<div id="t146" style="top:190.10px;line-height:19px;font-size:14.5px;color:#222;font-family:'Liberation Sans',sans-serif;white-space:pre;letter-spacing:-0.631px;left:47.3px;">Schedule Revisions</div>
<div id="t147" style="top:194.00px;line-height:14px;font-size:11px;color:#444;font-family:'Liberation Sans',sans-serif;white-space:pre;letter-spacing:-0.341px;left:166.8px;">(14)</div>
<div id="t148" style="top:190.50px;line-height:14px;font-size:11px;color:#666;font-family:'Liberation Sans',sans-serif;white-space:pre;letter-spacing:-0.586px;left:371.4px;">168 d</div>
<div id="t149" style="top:216.00px;line-height:16px;font-size:12.5px;color:#6a6a6a;font-family:'Liberation Sans',sans-serif;white-space:pre;letter-spacing:-0.167px;left:27.6px;">Period 6:  1/1/2012 to 2/1/2012</div>
<div id="t150" style="top:215.10px;line-height:14px;font-size:11px;color:#aaa;font-family:'Liberation Sans',sans-serif;white-space:pre;letter-spacing:-0.299px;left:350.9px;">5 d</div>
<div id="t151" style="top:239.90px;line-height:19px;font-size:14.5px;color:#222;font-family:'Liberation Sans',sans-serif;white-space:pre;letter-spacing:-0.339px;left:26.3px;">Start of Period</div>
<div id="t152" style="top:264.70px;line-height:19px;font-size:14.5px;color:#222;font-family:'Liberation Sans',sans-serif;white-space:pre;letter-spacing:-0.541px;left:26.8px;">Scheduling Mode: P6 → SDA</div>
<div id="t153" style="top:289.50px;line-height:19px;font-size:14.5px;color:#222;font-family:'Liberation Sans',sans-serif;white-space:pre;letter-spacing:-0.827px;left:26.8px;">Sun, 1/1</div>
<div id="t154" style="top:314.30px;line-height:19px;font-size:14.5px;color:#222;font-family:'Liberation Sans',sans-serif;white-space:pre;letter-spacing:-0.564px;left:26.8px;">Sun, 1/8</div>
<div id="t155" style="top:339.10px;line-height:19px;font-size:14.5px;color:#222;font-family:'Liberation Sans',sans-serif;white-space:pre;letter-spacing:-0.809px;left:26.8px;">Sun, 1/15</div>
<div id="t156" style="top:339.50px;line-height:14px;font-size:11px;color:#666;font-family:'Liberation Sans',sans-serif;white-space:pre;letter-spacing:-0.299px;left:350.9px;">7 d</div>
<div id="t157" style="top:363.70px;line-height:19px;font-size:14.5px;color:#222;font-family:'Liberation Sans',sans-serif;white-space:pre;letter-spacing:-0.586px;left:26.8px;">Sun, 1/22</div>
<div id="t158" style="top:364.10px;line-height:14px;font-size:11px;color:#666;font-family:'Liberation Sans',sans-serif;white-space:pre;letter-spacing:-0.299px;left:350.9px;">6 d</div>
<div id="t159" style="top:388.40px;line-height:19px;font-size:14.5px;color:#222;font-family:'Liberation Sans',sans-serif;white-space:pre;letter-spacing:-0.553px;left:26.8px;">Sun, 1/29</div>
<div id="t160" style="top:391.40px;line-height:15px;font-size:11.5px;color:#666;font-family:'Liberation Sans',sans-serif;white-space:pre;letter-spacing:-0.031px;left:90.1px;">through</div>
<div id="t161" style="top:388.40px;line-height:19px;font-size:14.5px;color:#222;font-family:'Liberation Sans',sans-serif;white-space:pre;letter-spacing:-0.770px;left:134.5px;">Tue, 1/31</div>
<div id="t162" style="top:388.80px;line-height:14px;font-size:11px;color:#666;font-family:'Liberation Sans',sans-serif;white-space:pre;letter-spacing:-0.232px;left:370.6px;">7 d</div>
<div id="t163" style="top:413.30px;line-height:19px;font-size:14.5px;color:#222;font-family:'Liberation Sans',sans-serif;white-space:pre;letter-spacing:-0.509px;left:26.8px;">Scheduling Mode: SDA → P6</div>
<div id="t164" style="top:438.10px;line-height:19px;font-size:14.5px;color:#222;font-family:'Liberation Sans',sans-serif;white-space:pre;letter-spacing:-0.631px;left:47.3px;">Schedule Revisions</div>
<div id="t165" style="top:442.00px;line-height:14px;font-size:11px;color:#444;font-family:'Liberation Sans',sans-serif;white-space:pre;letter-spacing:-0.484px;left:166.8px;">(5)</div>
<div id="t166" style="top:438.50px;line-height:14px;font-size:11px;color:#666;font-family:'Liberation Sans',sans-serif;white-space:pre;letter-spacing:-0.232px;left:370.6px;">1 d</div>
</div>
<div style="left:1538px;top:100.4px;width:16.8px;height:446.3px;background:#f0f0f0;"></div>
<div style="left:1538.5px;top:176px;width:16.3px;height:24.5px;background:#c9c9c9;"></div>
<svg width="18" height="450" style="left:1538px;top:100px"><polyline points="4.5,10.5 9,6 13.5,10.5" fill="none" stroke="#606060" stroke-width="1.2"/><polyline points="4.5,436.5 9,441 13.5,436.5" fill="none" stroke="#606060" stroke-width="1.2"/></svg>
<div style="left:1112.4px;top:554.2px;width:218.5px;height:25.7px;background:#dfdfdf;border:1px solid #c4c4c4;"></div>
<div style="left:1336.8px;top:554.2px;width:218.6px;height:25.7px;background:#dfdfdf;border:1px solid #c4c4c4;"></div>
<svg width="1556" height="987" style="left:0;top:0"><polygon points="1213,571.8 1229.4,571.8 1221.2,563" fill="#3c3c3c"/><polygon points="1437.5,563 1454.5,563 1446,571.8" fill="#333"/></svg>
<div style="left:1108.0px;top:321.0px;width:1.6px;height:1.6px;background:#5a5a5a;border-radius:0.8px;"></div>
<div style="left:1108.0px;top:326.8px;width:1.6px;height:1.6px;background:#5a5a5a;border-radius:0.8px;"></div>
<div style="left:1108.0px;top:332.6px;width:1.6px;height:1.6px;background:#5a5a5a;border-radius:0.8px;"></div>
<div style="left:1105px;top:591px;width:460px;height:395px;background:#efefef;border:1px solid #e2e2e2;border-radius:3px;"></div>
<div style="left:1112.3px;top:706px;width:442.7px;height:274.8px;background:#fcfcfc;border:1px solid #c4c4c4;"></div>
<svg width="1556" height="987" style="left:0;top:0"><circle cx="1120" cy="607.6" r="7.0" fill="#fbfbfb" stroke="#787878" stroke-width="2.3"/><polyline points="1120,603.8 1120,607.9 1116.5,607.9" fill="none" stroke="#787878" stroke-width="1.3"/><polygon points="1457.7,599.2 1541.5,599.2 1549.0,607.2 1541.5,615.2 1457.7,615.2 1450.2,607.2" fill="#f6f5f0" stroke="#ebe9df" stroke-width="1" opacity="1"/><polyline points="1457.4,599.6 1451.0,607.2 1457.4,614.8000000000001" fill="none" stroke="#58c4f8" stroke-width="1.5" opacity="1"/><rect x="1497.8" y="601.7" width="1.7" height="11" fill="#58c4f8"/><polygon points="1457.7,710.6 1541.5,710.6 1549.0,718.6 1541.5,726.6 1457.7,726.6 1450.2,718.6" fill="#f6f5f0" stroke="#ebe9df" stroke-width="1" opacity="1"/><polyline points="1457.4,711.0 1451.0,718.6 1457.4,726.2" fill="none" stroke="#58c4f8" stroke-width="1.5" opacity="1"/><rect x="1497.8" y="713.1" width="1.7" height="11" fill="#58c4f8"/><rect x="1183" y="732.5" width="106" height="14.4" rx="2" fill="#dfe6df"/><polyline points="1296,733.7 1290.2,739.7 1296,745.7" fill="none" stroke="#58c4f8" stroke-width="1.6"/><polygon points="1457.7,753.7 1541.5,753.7 1549.0,761.7 1541.5,769.7 1457.7,769.7 1450.2,761.7" fill="#f6f5f0" stroke="#ebe9df" stroke-width="1" opacity="1"/><polyline points="1457.4,754.1 1451.0,761.7 1457.4,769.3000000000001" fill="none" stroke="#58c4f8" stroke-width="1.5" opacity="1"/><rect x="1497.8" y="756.2" width="1.7" height="11" fill="#58c4f8"/><rect x="1183" y="774.8" width="212.0999999999999" height="14.4" rx="2" fill="#dfe6df"/><polyline points="1402.1,776 1396.3,782 1402.1,788" fill="none" stroke="#58c4f8" stroke-width="1.6"/><polygon points="1457.7,796.2 1541.5,796.2 1549.0,804.2 1541.5,812.2 1457.7,812.2 1450.2,804.2" fill="#f6f5f0" stroke="#ebe9df" stroke-width="1" opacity="1"/><rect x="1183" y="817.8" width="318" height="14.4" rx="2" fill="#dfe6df"/><rect x="1324.2" y="780.7" width="17.8" height="1.8" fill="#3f5d40"/><rect x="1346.2" y="780.7" width="18.2" height="1.8" fill="#3f5d40"/><rect x="1324.2" y="824.3" width="17.8" height="1.2" fill="#c9cfc9"/><rect x="1346.2" y="824.3" width="18.2" height="1.2" fill="#c9cfc9"/><polygon points="1426.8,821.3 1441.8,821.3 1448.3,824.8 1432.8,824.8" fill="#f0484c"/><polygon points="1432.8,824.8 1448.3,824.8 1441.8,828.3 1426.8,828.3" fill="#a9a9a9"/><polygon points="1448.5,821.3 1463.5,821.3 1470.0,824.8 1454.5,824.8" fill="#f0484c"/><polygon points="1454.5,824.8 1470.0,824.8 1463.5,828.3 1448.5,828.3" fill="#a9a9a9"/></svg>
<div id="t167" style="top:596.80px;line-height:21px;font-size:16.5px;color:#3c3c3c;font-family:'Liberation Sans',sans-serif;white-space:pre;letter-spacing:-0.516px;left:1132.2px;-webkit-text-stroke:0.3px #3c3c3c;">Sun, 1/29</div>
<div id="t168" style="top:600.50px;line-height:16px;font-size:12px;color:#555;font-family:'Liberation Sans',sans-serif;white-space:pre;letter-spacing:-0.215px;left:1205px;">through</div>
<div id="t169" style="top:596.80px;line-height:21px;font-size:16.5px;color:#3c3c3c;font-family:'Liberation Sans',sans-serif;white-space:pre;letter-spacing:-0.679px;left:1249.5px;-webkit-text-stroke:0.3px #3c3c3c;">Tue, 1/31</div>
<div id="t170" style="top:599.90px;line-height:14px;font-size:11px;color:#666;font-family:'Liberation Sans',sans-serif;white-space:pre;letter-spacing:-0.432px;left:1503px;">7 d</div>
<div id="t171" style="top:623.90px;line-height:16px;font-size:12px;color:#444;font-family:'Liberation Sans',sans-serif;white-space:pre;letter-spacing:-0.004px;left:1111.7px;">During this (partial) week, there were two activities that collectively recovered 7 d</div>
<div id="t172" style="top:639.70px;line-height:16px;font-size:12px;color:#444;font-family:'Liberation Sans',sans-serif;white-space:pre;letter-spacing:-0.049px;left:1111.7px;">for the project finish (PF) date.</div>
<div id="t173" style="top:662.90px;line-height:16px;font-size:12px;color:#444;font-family:'Liberation Sans',sans-serif;white-space:pre;letter-spacing:0.016px;left:1111.7px;">In addition, there was one activity that delayed or recovered while near-critical, but</div>
<div id="t174" style="top:678.70px;line-height:16px;font-size:12px;color:#444;font-family:'Liberation Sans',sans-serif;white-space:pre;letter-spacing:0.007px;left:1111.7px;">did not impact the PF date.</div>
<div id="t175" style="top:710.60px;line-height:16px;font-size:12px;color:#666;font-family:'Liberation Sans',sans-serif;white-space:pre;letter-spacing:-0.055px;left:1118.2px;">[SW-1100]</div>
<div id="t176" style="top:710.60px;line-height:16px;font-size:12px;color:#222;font-family:'Liberation Sans',sans-serif;white-space:pre;letter-spacing:0.032px;text-decoration:underline;left:1177.4px;-webkit-text-stroke:0.25px #222;">Surface Demo &amp; Clearing</div>
<div id="t177" style="top:711.30px;line-height:14px;font-size:11px;color:#666;font-family:'Liberation Sans',sans-serif;white-space:pre;letter-spacing:-0.432px;left:1503px;">1 d</div>
<div id="t178" style="top:753.70px;line-height:16px;font-size:12px;color:#666;font-family:'Liberation Sans',sans-serif;white-space:pre;letter-spacing:-0.154px;left:1118.2px;">[SW-1080]</div>
<div id="t179" style="top:753.70px;line-height:16px;font-size:12px;color:#222;font-family:'Liberation Sans',sans-serif;white-space:pre;letter-spacing:0.017px;text-decoration:underline;left:1177.4px;-webkit-text-stroke:0.25px #222;">Install Storm Pipe, SWM Trap, &amp; Earth Dike</div>
<div id="t180" style="top:754.40px;line-height:14px;font-size:11px;color:#666;font-family:'Liberation Sans',sans-serif;white-space:pre;letter-spacing:-0.432px;left:1503px;">6 d</div>
<div id="t181" style="top:796.20px;line-height:16px;font-size:12px;color:#666;font-family:'Liberation Sans',sans-serif;white-space:pre;letter-spacing:-0.154px;left:1118.2px;">[SW-1090]</div>
<div id="t182" style="top:796.20px;line-height:16px;font-size:12px;color:#222;font-family:'Liberation Sans',sans-serif;white-space:pre;letter-spacing:-0.045px;text-decoration:underline;left:1177.4px;-webkit-text-stroke:0.25px #222;">Install Storm Drainage D114-D128</div>
<div style="left:1326.8px;top:594.2px;width:1.6px;height:1.6px;background:#5a5a5a;border-radius:0.8px;"></div>
<div style="left:1332.6499999999999px;top:594.2px;width:1.6px;height:1.6px;background:#5a5a5a;border-radius:0.8px;"></div>
<div style="left:1338.5px;top:594.2px;width:1.6px;height:1.6px;background:#5a5a5a;border-radius:0.8px;"></div>
</div></body></html>
